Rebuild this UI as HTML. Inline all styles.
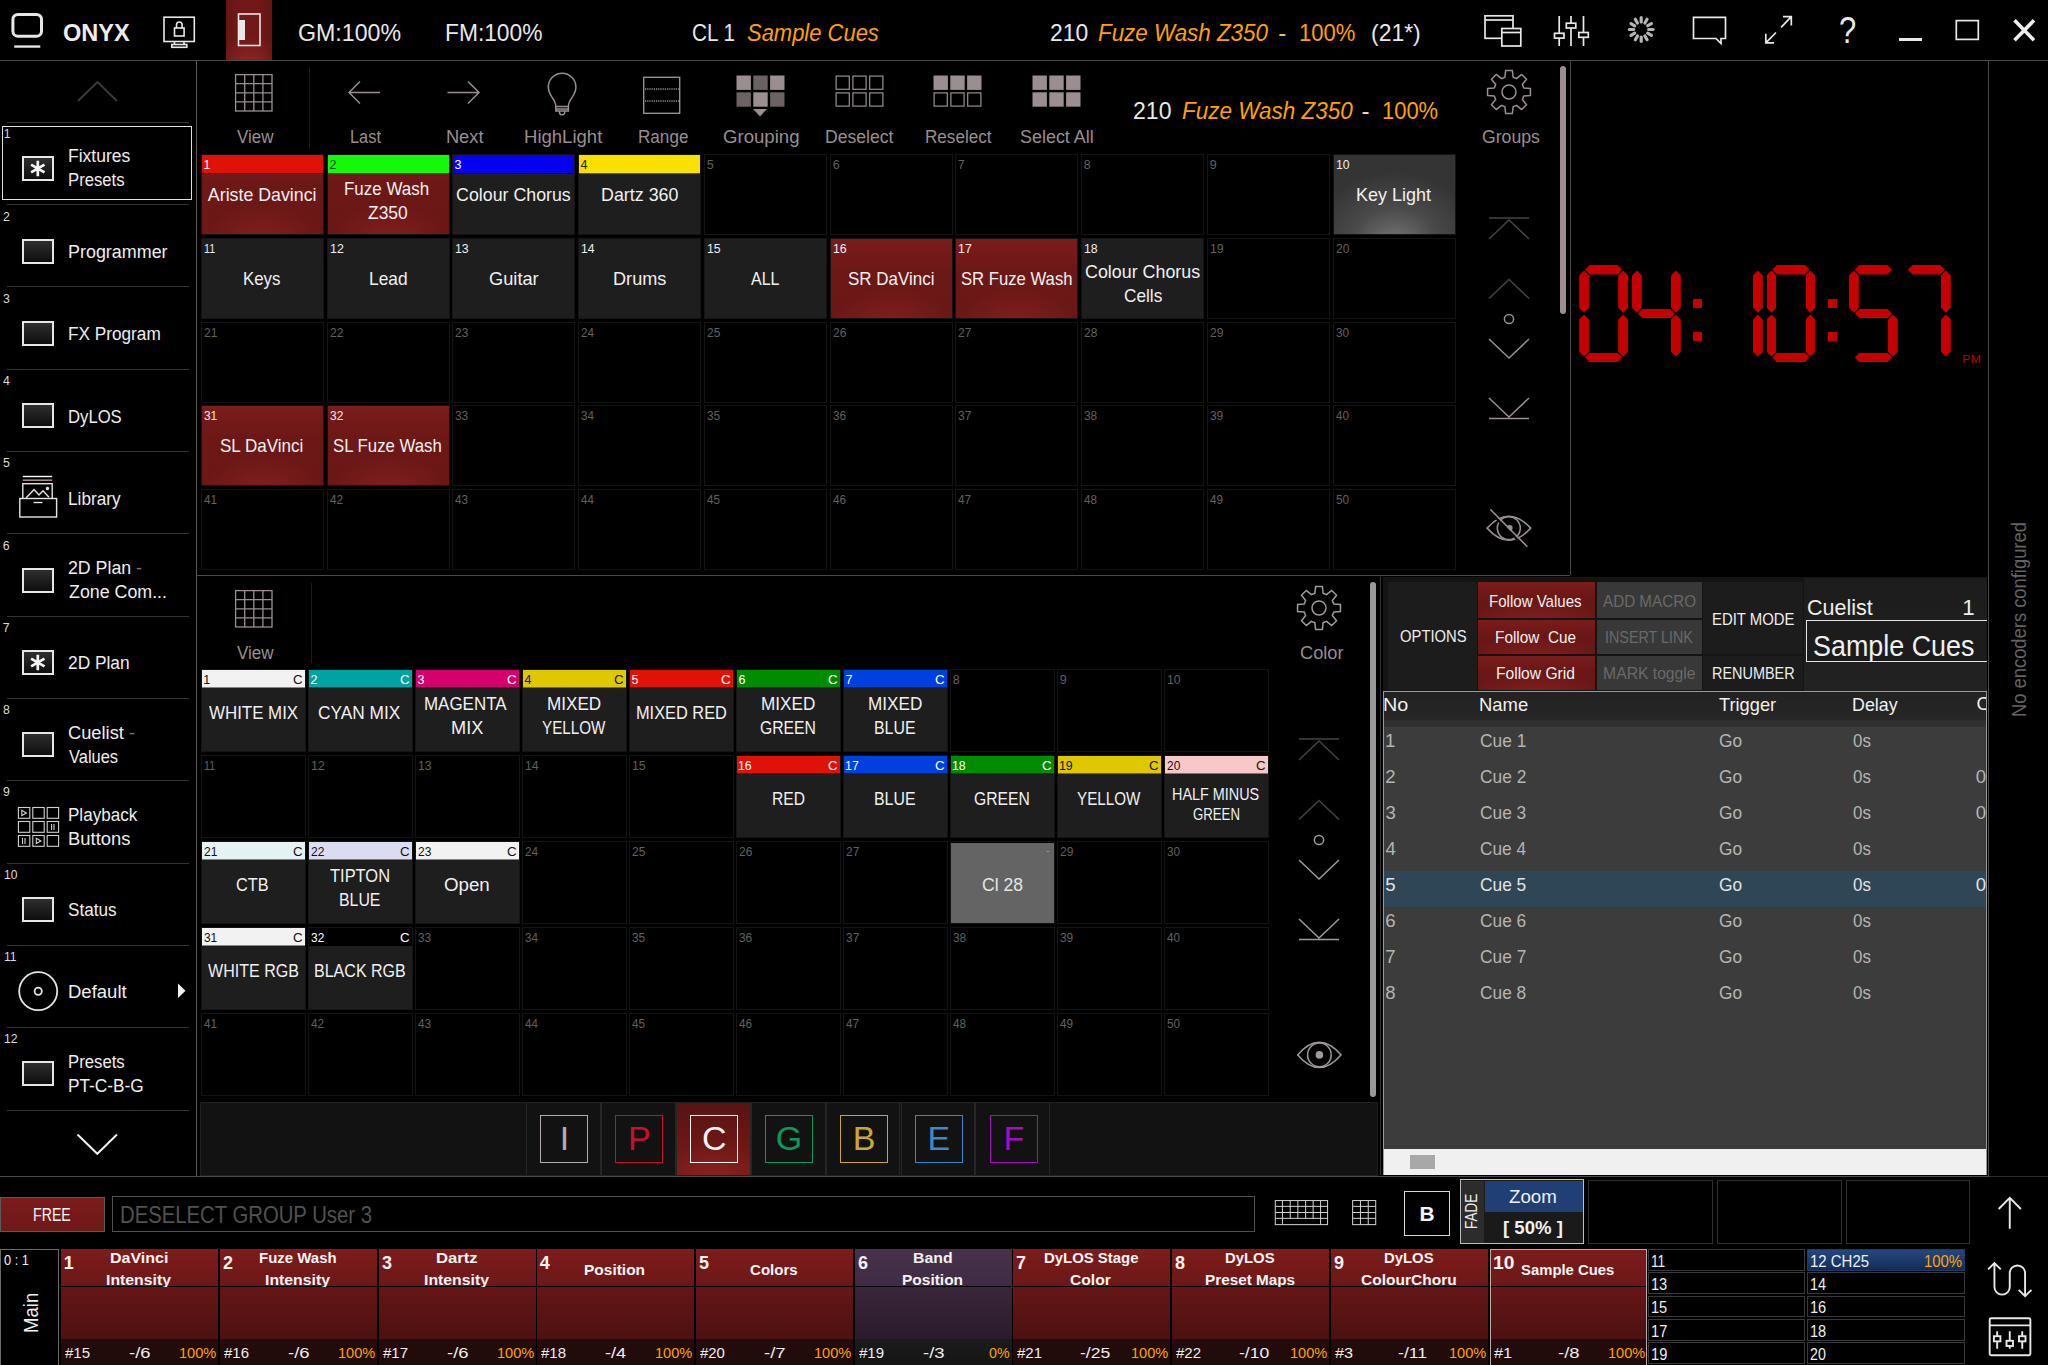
<!DOCTYPE html><html lang="en"><head><meta charset="utf-8"><title>ONYX</title><style>*{box-sizing:border-box;margin:0;padding:0}
html,body{width:2048px;height:1365px;background:#000;overflow:hidden}
body{font-family:"Liberation Sans",sans-serif;color:#e6e6e6;position:relative}
.a{position:absolute}
.t{position:absolute;white-space:nowrap;line-height:1;transform-origin:0 50%}
svg{position:absolute;overflow:visible}
.slot{position:absolute;border:1px solid #1b1b1b;background:#000}
.cell{position:absolute;background:#1e1e1e}
.red{background:radial-gradient(ellipse 50% 50% at 50% 110%,#82201e 0%,rgba(130,32,30,0) 100%),radial-gradient(ellipse 120% 120% at 50% 40%,rgba(0,0,0,0) 60%,rgba(0,0,0,.14) 100%),linear-gradient(#7a1c1b 0,#6c1817 40%,#6a1716 100%)}
.key{background:radial-gradient(ellipse 70% 90% at 50% 112%,#767676 0%,#4a4a4a 50%,#343434 100%)}
.bar{position:absolute;left:0;right:0;top:0}
.seg{position:absolute;background:#c40000}
.pb{position:absolute;top:1249.3px;height:116px;width:156.8px;background:linear-gradient(#7c1c1b 0,#6c1817 36.6px,#000 36.6px,#000 38.4px,#651615 38.4px,#4c1110 90.5px,#260c0c 90.5px,#1f0a0a 116px)}
.pbp{background:linear-gradient(#47314b 0,#3f2b43 36.6px,#000 36.6px,#000 38.4px,#3a263a 38.4px,#2a1b2c 90.5px,#1b1b1b 90.5px,#151515 116px)}
.lst{position:absolute;height:21.7px;border:1px solid #3a3a3a}
.row{position:absolute;left:1384px;width:602px;height:36px}
.cb{position:absolute}
</style></head><body>
<div class="a" style="left:0px;top:60px;width:2048px;height:1px;background:#4a4a4a"></div>
<svg style="left:0;top:0" width="60" height="60"><rect x="12.9" y="14.4" width="28.6" height="21.8" rx="5" fill="none" stroke="#e8e8e8" stroke-width="3"/><rect x="14.2" y="45.4" width="26.1" height="2.3" fill="#e8e8e8"/></svg>
<div class="t" style="left:62.63px;top:21px;font-size:24px;color:#ececec;transform:scaleX(0.9817);font-weight:bold;">ONYX</div>
<svg style="left:160px;top:0" width="40" height="60" fill="none" stroke="#e8e8e8" stroke-width="1.6"><rect x="4" y="17.2" width="30.3" height="24.3"/><path d="M14.5 41.5v3M24 41.5v3"/><rect x="11.8" y="44.5" width="15" height="2.8"/><rect x="14.5" y="28" width="9.6" height="8"/><path d="M16.5 28v-3.200a2.800 2.800 0 0 1 5.600 0v3.200"/></svg>
<div class="a" style="left:226px;top:0px;width:46px;height:60px;background:radial-gradient(ellipse 70% 45% at 50% 105%,#8e2421 0%,rgba(142,36,33,0) 100%),linear-gradient(90deg,#641615 0,#701918 30%,#701918 70%,#641615 100%)"></div>
<svg style="left:226px;top:0" width="46" height="60"><rect x="12.5" y="14" width="21.5" height="31.5" fill="none" stroke="#e8e8e8" stroke-width="1.6"/><rect x="12.500" y="20" width="6.500" height="20" fill="#e8e8e8"/></svg>
<div class="t" style="left:298.33px;top:21px;font-size:24.1px;color:#e8e8e8;transform:scaleX(0.9621);">GM:100%</div>
<div class="t" style="left:444.53px;top:21px;font-size:24.1px;color:#e8e8e8;transform:scaleX(0.9452);">FM:100%</div>
<div class="t" style="left:692.15px;top:21px;font-size:24.1px;color:#e8e8e8;transform:scaleX(0.8597);">CL 1</div>
<div class="t" style="left:747.08px;top:21px;font-size:24.1px;color:#ffa200;transform:scaleX(0.9115);font-style:italic;">Sample Cues</div>
<div class="t" style="left:1049.55px;top:21px;font-size:24.1px;color:#e8e8e8;transform:scaleX(0.9512);">210</div>
<div class="t" style="left:1097.91px;top:21px;font-size:24.1px;color:#ffa200;transform:scaleX(0.9285);font-style:italic;">Fuze Wash Z350</div>
<div class="t" style="left:1278.14px;top:21px;font-size:24.1px;color:#f0c070;">-</div>
<div class="t" style="left:1299.02px;top:21px;font-size:24.1px;color:#ffa200;transform:scaleX(0.9127);">100%</div>
<div class="t" style="left:1370.58px;top:21px;font-size:24.1px;color:#e8e8e8;transform:scaleX(0.9523);">(21*)</div>
<svg style="left:1480px;top:0" width="50" height="60" fill="none" stroke="#e8e8e8" stroke-width="1.7"><rect x="5" y="15.8" width="28" height="22.5"/><path d="M5 20h28"/><rect x="21.8" y="28.5" width="19" height="17.5" fill="#000"/><path d="M21.8 32.5h19"/></svg>
<svg style="left:1550px;top:0" width="50" height="60" fill="none" stroke="#e8e8e8" stroke-width="1.7"><path d="M9.2 16v30M21 16v30M33.5 16v30"/><rect x="4.5" y="33.3" width="9.5" height="4.8" fill="#000"/><rect x="16.3" y="23.2" width="9.5" height="4.8" fill="#000"/><rect x="28.8" y="32.5" width="9.5" height="4.8" fill="#000"/></svg>
<svg style="left:1621px;top:9px" width="42" height="42" stroke="#b6b6b6" stroke-width="3.200" stroke-linecap="round"><path d="M27.7 20.5L32.0 20.5"/><path d="M26.7 24.2L30.4 26.4"/><path d="M23.9 27.0L26.1 30.7"/><path d="M20.2 28.0L20.2 32.3"/><path d="M16.5 27.0L14.3 30.7"/><path d="M13.7 24.2L10.0 26.4"/><path d="M12.7 20.5L8.4 20.5"/><path d="M13.7 16.8L10.0 14.6"/><path d="M16.4 14.0L14.3 10.3"/><path d="M20.2 13.0L20.2 8.7"/><path d="M23.9 14.0L26.1 10.3"/><path d="M26.7 16.7L30.4 14.6"/></svg>
<svg style="left:1690px;top:0" width="50" height="60" fill="none" stroke="#e8e8e8" stroke-width="1.7"><path d="M3.5 17.3h32v21.200h-4.500v5l-5-5h-22.500z"/></svg>
<svg style="left:1760px;top:0" width="50" height="60" fill="none" stroke="#e8e8e8" stroke-width="1.7"><path d="M21.100 27.300L31.300 16.700M23 16.700h8.300v8.900M16 32.500L5.800 42.800M5.800 33.800v9h8.200"/></svg>
<div class="t" style="left:1838.93px;top:12px;font-size:37.5px;color:#e8e8e8;transform:scaleX(0.8256);">?</div>
<div class="a" style="left:1898.5px;top:38px;width:23.7px;height:2.5px;background:#e8e8e8"></div>
<svg style="left:1950px;top:0" width="40" height="60" fill="none" stroke="#e8e8e8" stroke-width="1.7"><rect x="6.300" y="20.600" width="22" height="18.800"/></svg>
<svg style="left:2005px;top:0" width="40" height="60" fill="none" stroke="#ececec" stroke-width="3.6"><path d="M9.5 20.300L29 40.300M29 20.300L9.5 40.300"/></svg>
<div class="a" style="left:196px;top:61px;width:1px;height:1115px;background:#5a5a5a"></div>
<svg style="left:70px;top:78px" width="56" height="30" fill="none" stroke="#3c3c3c" stroke-width="1.8"><path d="M8 23L27.5 4L47 23"/></svg>
<div class="a" style="left:7px;top:122px;width:182px;height:1px;background:#343434"></div>
<div class="t" style="left:3.71px;top:128px;font-size:12.3px;color:#dcdcdc;">1</div>
<div class="a" style="left:22.4px;top:156.3px;width:31.6px;height:25px;border:2px solid #e6e6e6;background:linear-gradient(#2e2e2e,#0e0e0e)"></div>
<svg style="left:22.4px;top:156.3px" width="32" height="25" stroke="#f4f4f4" stroke-width="2.7"><path d="M15.8 4.800v15.400M9.100 8.700l13.400 7.700M22.500 8.700l-13.400 7.700"/></svg>
<div class="t" style="left:67.76px;top:147px;font-size:18px;color:#eee;transform:scaleX(0.9728);">Fixtures</div>
<div class="t" style="left:67.83px;top:171px;font-size:18px;color:#eee;transform:scaleX(0.9271);">Presets</div>
<div class="a" style="left:7px;top:204px;width:182px;height:1px;background:#343434"></div>
<div class="t" style="left:2.88px;top:211px;font-size:12.3px;color:#dcdcdc;">2</div>
<div class="a" style="left:22.4px;top:238.55px;width:31.6px;height:25px;border:2px solid #e6e6e6;background:linear-gradient(#2e2e2e,#0e0e0e)"></div>
<div class="t" style="left:67.73px;top:243px;font-size:18px;color:#eee;transform:scaleX(0.9955);">Programmer</div>
<div class="a" style="left:7px;top:286px;width:182px;height:1px;background:#343434"></div>
<div class="t" style="left:2.92px;top:293px;font-size:12.3px;color:#dcdcdc;">3</div>
<div class="a" style="left:22.4px;top:320.8px;width:31.6px;height:25px;border:2px solid #e6e6e6;background:linear-gradient(#2e2e2e,#0e0e0e)"></div>
<div class="t" style="left:67.79px;top:325px;font-size:18px;color:#eee;transform:scaleX(0.9559);">FX Program</div>
<div class="a" style="left:7px;top:369px;width:182px;height:1px;background:#343434"></div>
<div class="t" style="left:2.92px;top:375px;font-size:12.3px;color:#dcdcdc;">4</div>
<div class="a" style="left:22.4px;top:403.05px;width:31.6px;height:25px;border:2px solid #e6e6e6;background:linear-gradient(#2e2e2e,#0e0e0e)"></div>
<div class="t" style="left:67.83px;top:408px;font-size:18px;color:#eee;transform:scaleX(0.9262);">DyLOS</div>
<div class="a" style="left:7px;top:451px;width:182px;height:1px;background:#343434"></div>
<div class="t" style="left:2.89px;top:457px;font-size:12.3px;color:#dcdcdc;">5</div>
<svg style="left:16px;top:473.6px" width="44" height="48" fill="none" stroke="#e4e4e4" stroke-width="1.4"><path d="M6.800 2.500h29.400" stroke="#fff"/><path d="M6.800 6.200h29.400" stroke="#c09a9a"/><rect x="6.800" y="9.700" width="29.400" height="17"/><path d="M10 24l8-8.500 5 5.500 4-4.300 6 6.500"/><circle cx="31.500" cy="14.500" r="1" fill="#e4e4e4"/><rect x="3.800" y="24.500" width="36.800" height="18.500" fill="#000"/><path d="M17.500 28.500h9"/></svg>
<div class="t" style="left:67.79px;top:490px;font-size:18px;color:#eee;transform:scaleX(0.9550);">Library</div>
<div class="a" style="left:7px;top:533px;width:182px;height:1px;background:#343434"></div>
<div class="t" style="left:2.84px;top:540px;font-size:12.3px;color:#dcdcdc;">6</div>
<div class="a" style="left:22.4px;top:567.55px;width:31.6px;height:25px;border:2px solid #e6e6e6;background:linear-gradient(#2e2e2e,#0e0e0e)"></div>
<div class="t" style="left:68.31px;top:559px;font-size:18px;color:#eee;transform:scaleX(0.9860);">2D Plan <span style="color:#777">-</span></div>
<div class="t" style="left:68.63px;top:583px;font-size:18px;color:#eee;transform:scaleX(0.9895);">Zone Com...</div>
<div class="a" style="left:7px;top:616px;width:182px;height:1px;background:#343434"></div>
<div class="t" style="left:2.87px;top:622px;font-size:12.3px;color:#dcdcdc;">7</div>
<div class="a" style="left:22.4px;top:649.8px;width:31.6px;height:25px;border:2px solid #e6e6e6;background:linear-gradient(#2e2e2e,#0e0e0e)"></div>
<svg style="left:22.4px;top:649.8px" width="32" height="25" stroke="#f4f4f4" stroke-width="2.7"><path d="M15.8 4.800v15.400M9.100 8.700l13.400 7.700M22.500 8.700l-13.400 7.700"/></svg>
<div class="t" style="left:68.33px;top:654px;font-size:18px;color:#eee;transform:scaleX(0.9619);">2D Plan</div>
<div class="a" style="left:7px;top:698px;width:182px;height:1px;background:#343434"></div>
<div class="t" style="left:2.88px;top:704px;font-size:12.3px;color:#dcdcdc;">8</div>
<div class="a" style="left:22.4px;top:732.05px;width:31.6px;height:25px;border:2px solid #e6e6e6;background:linear-gradient(#2e2e2e,#0e0e0e)"></div>
<div class="t" style="left:68.27px;top:724px;font-size:18px;color:#eee;transform:scaleX(1.0155);">Cuelist <span style="color:#777">-</span></div>
<div class="t" style="left:69.13px;top:748px;font-size:18px;color:#eee;transform:scaleX(0.9133);">Values</div>
<div class="a" style="left:7px;top:780px;width:182px;height:1px;background:#343434"></div>
<div class="t" style="left:2.88px;top:786px;font-size:12.3px;color:#dcdcdc;">9</div>
<svg style="left:16px;top:803.6px" width="46" height="44" fill="none" stroke="#d0d0d0" stroke-width="1.1"><rect x="2.4" y="3.5" width="11.400" height="10.800"/><rect x="16.8" y="3.5" width="11.400" height="10.800"/><rect x="31.2" y="3.5" width="11.400" height="10.800"/><rect x="2.4" y="17.5" width="11.400" height="10.800"/><rect x="16.8" y="17.5" width="11.400" height="10.800"/><rect x="31.2" y="17.5" width="11.400" height="10.800"/><rect x="2.4" y="31.5" width="11.400" height="10.800"/><rect x="16.8" y="31.5" width="11.400" height="10.800"/><rect x="31.2" y="31.5" width="11.400" height="10.800"/><path d="M5.800 6.300l4.600 2.600-4.600 2.600zM20.300 34.300l4.600 2.600-4.600 2.600zM35.600 20v6M38 20v6M6.500 34v6M9 34v6"/></svg>
<div class="t" style="left:67.8px;top:806px;font-size:18px;color:#eee;transform:scaleX(0.9471);">Playback</div>
<div class="t" style="left:67.69px;top:830px;font-size:18px;color:#eee;transform:scaleX(1.0235);">Buttons</div>
<div class="a" style="left:7px;top:863px;width:182px;height:1px;background:#343434"></div>
<div class="t" style="left:3.68px;top:869px;font-size:12.3px;color:#dcdcdc;transform:scaleX(0.9785);">10</div>
<div class="a" style="left:22.4px;top:896.55px;width:31.6px;height:25px;border:2px solid #e6e6e6;background:linear-gradient(#2e2e2e,#0e0e0e)"></div>
<div class="t" style="left:68.42px;top:901px;font-size:18px;color:#eee;transform:scaleX(0.9503);">Status</div>
<div class="a" style="left:7px;top:945px;width:182px;height:1px;background:#343434"></div>
<div class="t" style="left:3.67px;top:951px;font-size:12.3px;color:#dcdcdc;transform:scaleX(0.9882);">11</div>
<svg style="left:16px;top:968.7px" width="44" height="44" fill="none" stroke="#e4e4e4" stroke-width="1.8"><circle cx="22.200" cy="22.200" r="19"/><circle cx="22.200" cy="22.200" r="3.600"/></svg>
<svg style="left:176px;top:982.6px" width="12" height="16"><path d="M2 0.500l7.500 7.300-7.500 7.300z" fill="#f0f0f0"/></svg>
<div class="t" style="left:67.68px;top:983px;font-size:18px;color:#eee;transform:scaleX(1.0284);">Default</div>
<div class="a" style="left:7px;top:1027px;width:182px;height:1px;background:#343434"></div>
<div class="t" style="left:3.67px;top:1033px;font-size:12.3px;color:#dcdcdc;transform:scaleX(0.9896);">12</div>
<div class="a" style="left:22.4px;top:1061.05px;width:31.6px;height:25px;border:2px solid #e6e6e6;background:linear-gradient(#2e2e2e,#0e0e0e)"></div>
<div class="t" style="left:67.83px;top:1053px;font-size:18px;color:#eee;transform:scaleX(0.9288);">Presets</div>
<div class="t" style="left:67.78px;top:1077px;font-size:18px;color:#eee;transform:scaleX(0.9589);">PT-C-B-G</div>
<div class="a" style="left:7px;top:1110px;width:182px;height:1px;background:#343434"></div>
<div class="a" style="left:2.2px;top:126px;width:190.3px;height:74px;border:1.3px solid #e0e0e0"></div>
<svg style="left:70px;top:1128px" width="56" height="30" fill="none" stroke="#f0f0f0" stroke-width="2"><path d="M7.500 6.500L27.300 25.800L47 6.500"/></svg>
<svg style="left:235.2px;top:74.3px" width="38" height="38" fill="none" stroke="#9a8e90" stroke-width="1.3"><rect x="0.6" y="0.6" width="36.4" height="36.4"/><path d="M9.7 0.6v36.4M0.6 9.7h36.4"/><path d="M18.8 0.6v36.4M0.6 18.8h36.4"/><path d="M27.9 0.6v36.4M0.6 27.9h36.4"/></svg>
<div class="t" style="left:236.53px;top:128px;font-size:18.3px;color:#9a8e90;transform:scaleX(0.9311);">View</div>
<div class="a" style="left:309px;top:68px;width:1px;height:80px;background:#1c1c1c"></div>
<svg style="left:345px;top:78px" width="40" height="30" fill="none" stroke="#9a8e90" stroke-width="1.5"><path d="M35 14.5H4M15 3.5L4 14.5l11 11"/></svg>
<div class="t" style="left:350.06px;top:128px;font-size:18.3px;color:#9a8e90;transform:scaleX(0.8952);">Last</div>
<svg style="left:444px;top:78px" width="40" height="30" fill="none" stroke="#9a8e90" stroke-width="1.5"><path d="M3.5 14.5H35M24 3.5l11 11-11 11"/></svg>
<div class="t" style="left:445.89px;top:128px;font-size:18.3px;color:#9a8e90;">Next</div>
<svg style="left:545px;top:70px" width="34" height="48" fill="none" stroke="#9a8e90" stroke-width="1.5"><path d="M10.800 36.500c0-8-7.500-10-7.500-19.500a13.800 13.800 0 0 1 27.600 0c0 9.500-7.500 11.500-7.500 19.500zM10.800 36.500v4.500h12.600v-4.500M10.800 39h12.600M14.500 41v1.200a2.600 2.600 0 0 0 5.200 0v-1.200"/></svg>
<div class="t" style="left:524.08px;top:128px;font-size:18.3px;color:#9a8e90;transform:scaleX(1.0134);">HighLight</div>
<svg style="left:642px;top:75px" width="40" height="40" fill="none" stroke="#9a8e90" stroke-width="1.4"><rect x="1.700" y="2.300" width="36" height="36"/><path d="M3 14h34M3 26h34" stroke-dasharray="1.2 1"/></svg>
<div class="t" style="left:637.7px;top:128px;font-size:18.3px;color:#9a8e90;transform:scaleX(0.9358);">Range</div>
<svg style="left:735.5px;top:75px" width="50" height="36"><rect x="0.5" y="0.5" width="14.4" height="14.4" fill="#9a8e90"/><rect x="17.3" y="0.5" width="14.4" height="14.4" fill="#6c6163"/><rect x="34.1" y="0.5" width="14.4" height="14.4" fill="#9a8e90"/><rect x="0.5" y="17.3" width="14.4" height="14.4" fill="#6c6163"/><rect x="17.3" y="17.3" width="14.4" height="14.4" fill="#9a8e90"/><rect x="34.1" y="17.3" width="14.4" height="14.4" fill="#6c6163"/></svg>
<svg style="left:750px;top:108px" width="20" height="10"><path d="M3 1h14l-7 7.500z" fill="#9a8e90"/></svg>
<div class="t" style="left:722.56px;top:128px;font-size:18.3px;color:#9a8e90;transform:scaleX(1.0180);">Grouping</div>
<svg style="left:834.5px;top:75px" width="50" height="36"><rect x="1.1" y="1.1" width="13.2" height="13.2" fill="none" stroke="#9a8e90" stroke-width="1.2"/><rect x="17.9" y="1.1" width="13.2" height="13.2" fill="none" stroke="#9a8e90" stroke-width="1.2"/><rect x="34.7" y="1.1" width="13.2" height="13.2" fill="none" stroke="#9a8e90" stroke-width="1.2"/><rect x="1.1" y="17.9" width="13.2" height="13.2" fill="none" stroke="#9a8e90" stroke-width="1.2"/><rect x="17.9" y="17.9" width="13.2" height="13.2" fill="none" stroke="#9a8e90" stroke-width="1.2"/><rect x="34.7" y="17.9" width="13.2" height="13.2" fill="none" stroke="#9a8e90" stroke-width="1.2"/></svg>
<div class="t" style="left:825.25px;top:128px;font-size:18.3px;color:#9a8e90;transform:scaleX(0.9632);">Deselect</div>
<svg style="left:933px;top:75px" width="50" height="36"><rect x="0.5" y="0.5" width="14.4" height="14.4" fill="#9a8e90"/><rect x="17.3" y="0.5" width="14.4" height="14.4" fill="#9a8e90"/><rect x="34.1" y="0.5" width="14.4" height="14.4" fill="#9a8e90"/><rect x="1.1" y="17.9" width="13.2" height="13.2" fill="none" stroke="#9a8e90" stroke-width="1.2"/><rect x="17.9" y="17.9" width="13.2" height="13.2" fill="none" stroke="#9a8e90" stroke-width="1.2"/><rect x="34.7" y="17.9" width="13.2" height="13.2" fill="none" stroke="#9a8e90" stroke-width="1.2"/></svg>
<div class="t" style="left:925.4px;top:128px;font-size:18.3px;color:#9a8e90;transform:scaleX(0.9344);">Reselect</div>
<svg style="left:1031.8px;top:75px" width="50" height="36"><rect x="0.5" y="0.5" width="14.4" height="14.4" fill="#9a8e90"/><rect x="17.3" y="0.5" width="14.4" height="14.4" fill="#9a8e90"/><rect x="34.1" y="0.5" width="14.4" height="14.4" fill="#9a8e90"/><rect x="0.5" y="17.3" width="14.4" height="14.4" fill="#9a8e90"/><rect x="17.3" y="17.3" width="14.4" height="14.4" fill="#9a8e90"/><rect x="34.1" y="17.3" width="14.4" height="14.4" fill="#9a8e90"/></svg>
<div class="t" style="left:1019.98px;top:128px;font-size:18.3px;color:#9a8e90;transform:scaleX(0.9808);">Select All</div>
<div class="t" style="left:1132.84px;top:99px;font-size:24.1px;color:#e8e8e8;transform:scaleX(0.9565);">210</div>
<div class="t" style="left:1181.81px;top:99px;font-size:24.1px;color:#ffa200;transform:scaleX(0.9328);font-style:italic;">Fuze Wash Z350</div>
<div class="t" style="left:1361.59px;top:99px;font-size:24.1px;color:#f0d8b0;">-</div>
<div class="t" style="left:1382.03px;top:99px;font-size:24.1px;color:#ffa200;transform:scaleX(0.9110);">100%</div>
<svg style="left:1484.9px;top:68.3px" width="48" height="48" fill="none" stroke="#9a8e90" stroke-width="1.5" stroke-linejoin="round"><path d="M19.91 9.26L20.61 2.57L27.39 2.57L28.09 9.26L31.53 10.68L36.75 6.44L41.56 11.25L37.32 16.47L38.74 19.91L45.43 20.61L45.43 27.39L38.74 28.09L37.32 31.53L41.56 36.75L36.75 41.56L31.53 37.32L28.09 38.74L27.39 45.43L20.61 45.43L19.91 38.74L16.47 37.32L11.25 41.56L6.44 36.75L10.68 31.53L9.26 28.09L2.57 27.39L2.57 20.61L9.26 19.91L10.68 16.47L6.44 11.25L11.25 6.44L16.47 10.68z"/><circle cx="24" cy="24" r="7"/></svg>
<div class="t" style="left:1481.71px;top:128px;font-size:18.3px;color:#9a8e90;transform:scaleX(0.9653);">Groups</div>
<div class="a" style="left:200.7px;top:153.7px;width:123.4px;height:81.5px;border:1px solid #141414"></div>
<div class="cell red" style="left:202px;top:155px;width:121px;height:78.5px"></div>
<div class="a" style="left:202px;top:155px;width:121px;height:19.2px;background:#e01208;border-bottom:1.400px solid rgba(0,0,0,.6)"></div>
<div class="t" style="left:203.45px;top:159px;font-size:12.5px;color:#fff;">1</div>
<div class="t" style="left:207.87px;top:187px;font-size:17.8px;color:#f0f0f0;">Ariste Davinci</div>
<div class="a" style="left:326.7px;top:153.7px;width:123.4px;height:81.5px;border:1px solid #141414"></div>
<div class="cell red" style="left:328px;top:155px;width:121px;height:78.5px"></div>
<div class="a" style="left:328px;top:155px;width:121px;height:19.2px;background:#14f80a;border-bottom:1.400px solid rgba(0,0,0,.6)"></div>
<div class="t" style="left:329.57px;top:159px;font-size:12.5px;color:#0a3a0a;">2</div>
<div class="t" style="left:344.41px;top:181px;font-size:17.8px;color:#f0f0f0;transform:scaleX(0.9531);">Fuze Wash</div>
<div class="t" style="left:368.15px;top:205px;font-size:17.8px;color:#f0f0f0;transform:scaleX(0.9819);">Z350</div>
<div class="a" style="left:451.7px;top:153.7px;width:123.4px;height:81.5px;border:1px solid #141414"></div>
<div class="cell" style="left:453px;top:155px;width:121px;height:78.5px"></div>
<div class="a" style="left:453px;top:155px;width:121px;height:19.2px;background:#0600f0;border-bottom:1.400px solid rgba(0,0,0,.6)"></div>
<div class="t" style="left:454.61px;top:159px;font-size:12.5px;color:#fff;">3</div>
<div class="t" style="left:456.09px;top:187px;font-size:17.8px;color:#f0f0f0;">Colour Chorus</div>
<div class="a" style="left:577.7px;top:153.7px;width:123.4px;height:81.5px;border:1px solid #141414"></div>
<div class="cell" style="left:579px;top:155px;width:121px;height:78.5px"></div>
<div class="a" style="left:579px;top:155px;width:121px;height:19.2px;background:#f8e000;border-bottom:1.400px solid rgba(0,0,0,.6)"></div>
<div class="t" style="left:580.61px;top:159px;font-size:12.5px;color:#222;">4</div>
<div class="t" style="left:600.83px;top:187px;font-size:17.8px;color:#f0f0f0;transform:scaleX(1.0051);">Dartz 360</div>
<div class="a" style="left:703.7px;top:153.7px;width:123.4px;height:81.5px;border:1px solid #141414"></div>
<div class="t" style="left:706.79px;top:159px;font-size:12.5px;color:#606060;">5</div>
<div class="a" style="left:829.7px;top:153.7px;width:123.4px;height:81.5px;border:1px solid #141414"></div>
<div class="t" style="left:832.73px;top:159px;font-size:12.5px;color:#606060;">6</div>
<div class="a" style="left:954.7px;top:153.7px;width:123.4px;height:81.5px;border:1px solid #141414"></div>
<div class="t" style="left:957.77px;top:159px;font-size:12.5px;color:#606060;">7</div>
<div class="a" style="left:1080.7px;top:153.7px;width:123.4px;height:81.5px;border:1px solid #141414"></div>
<div class="t" style="left:1083.77px;top:159px;font-size:12.5px;color:#606060;">8</div>
<div class="a" style="left:1206.7px;top:153.7px;width:123.4px;height:81.5px;border:1px solid #141414"></div>
<div class="t" style="left:1209.78px;top:159px;font-size:12.5px;color:#606060;">9</div>
<div class="a" style="left:1332.7px;top:153.7px;width:123.4px;height:81.5px;border:1px solid #141414"></div>
<div class="cell key" style="left:1334px;top:155px;width:121px;height:78.5px"></div>
<div class="t" style="left:1335.67px;top:159px;font-size:12.5px;color:#eee;transform:scaleX(0.9789);">10</div>
<div class="t" style="left:1356.22px;top:187px;font-size:17.8px;color:#f0f0f0;transform:scaleX(1.0107);">Key Light</div>
<div class="a" style="left:200.7px;top:237.7px;width:123.4px;height:81.5px;border:1px solid #141414"></div>
<div class="cell" style="left:202px;top:239px;width:121px;height:78.5px"></div>
<div class="t" style="left:204.49px;top:243px;font-size:12.5px;color:#eee;transform:scaleX(0.8508);">11</div>
<div class="t" style="left:243.42px;top:271px;font-size:17.8px;color:#f0f0f0;transform:scaleX(0.9475);">Keys</div>
<div class="a" style="left:326.7px;top:237.7px;width:123.4px;height:81.5px;border:1px solid #141414"></div>
<div class="cell" style="left:328px;top:239px;width:121px;height:78.5px"></div>
<div class="t" style="left:329.66px;top:243px;font-size:12.5px;color:#eee;transform:scaleX(0.9900);">12</div>
<div class="t" style="left:369.27px;top:271px;font-size:17.8px;color:#f0f0f0;transform:scaleX(0.9759);">Lead</div>
<div class="a" style="left:451.7px;top:237.7px;width:123.4px;height:81.5px;border:1px solid #141414"></div>
<div class="cell" style="left:453px;top:239px;width:121px;height:78.5px"></div>
<div class="t" style="left:454.66px;top:243px;font-size:12.5px;color:#eee;transform:scaleX(0.9837);">13</div>
<div class="t" style="left:488.88px;top:271px;font-size:17.8px;color:#f0f0f0;transform:scaleX(1.0258);">Guitar</div>
<div class="a" style="left:577.7px;top:237.7px;width:123.4px;height:81.5px;border:1px solid #141414"></div>
<div class="cell" style="left:579px;top:239px;width:121px;height:78.5px"></div>
<div class="t" style="left:580.68px;top:243px;font-size:12.5px;color:#eee;transform:scaleX(0.9694);">14</div>
<div class="t" style="left:613.01px;top:271px;font-size:17.8px;color:#f0f0f0;transform:scaleX(1.0198);">Drums</div>
<div class="a" style="left:703.7px;top:237.7px;width:123.4px;height:81.5px;border:1px solid #141414"></div>
<div class="cell" style="left:705px;top:239px;width:121px;height:78.5px"></div>
<div class="t" style="left:706.67px;top:243px;font-size:12.5px;color:#eee;transform:scaleX(0.9818);">15</div>
<div class="t" style="left:751.27px;top:271px;font-size:17.8px;color:#f0f0f0;transform:scaleX(0.8987);">ALL</div>
<div class="a" style="left:829.7px;top:237.7px;width:123.4px;height:81.5px;border:1px solid #141414"></div>
<div class="cell red" style="left:831px;top:239px;width:121px;height:78.5px"></div>
<div class="t" style="left:832.66px;top:243px;font-size:12.5px;color:#eee;transform:scaleX(0.9837);">16</div>
<div class="t" style="left:847.83px;top:271px;font-size:17.8px;color:#f0f0f0;transform:scaleX(0.9551);">SR DaVinci</div>
<div class="a" style="left:954.7px;top:237.7px;width:123.4px;height:81.5px;border:1px solid #141414"></div>
<div class="cell red" style="left:956px;top:239px;width:121px;height:78.5px"></div>
<div class="t" style="left:957.66px;top:243px;font-size:12.5px;color:#eee;transform:scaleX(0.9900);">17</div>
<div class="t" style="left:960.84px;top:271px;font-size:17.8px;color:#f0f0f0;transform:scaleX(0.9378);">SR Fuze Wash</div>
<div class="a" style="left:1080.7px;top:237.7px;width:123.4px;height:81.5px;border:1px solid #141414"></div>
<div class="cell" style="left:1082px;top:239px;width:121px;height:78.5px"></div>
<div class="t" style="left:1083.66px;top:243px;font-size:12.5px;color:#eee;transform:scaleX(0.9832);">18</div>
<div class="t" style="left:1085.09px;top:264px;font-size:17.8px;color:#f0f0f0;transform:scaleX(1.0043);">Colour Chorus</div>
<div class="t" style="left:1123.73px;top:288px;font-size:17.8px;color:#f0f0f0;transform:scaleX(0.9680);">Cells</div>
<div class="a" style="left:1206.7px;top:237.7px;width:123.4px;height:81.5px;border:1px solid #141414"></div>
<div class="t" style="left:1209.66px;top:243px;font-size:12.5px;color:#606060;transform:scaleX(0.9871);">19</div>
<div class="a" style="left:1332.7px;top:237.7px;width:123.4px;height:81.5px;border:1px solid #141414"></div>
<div class="t" style="left:1336px;top:243px;font-size:12.5px;color:#606060;transform:scaleX(0.9541);">20</div>
<div class="a" style="left:200.7px;top:321.7px;width:123.4px;height:81.5px;border:1px solid #141414"></div>
<div class="t" style="left:203.99px;top:327px;font-size:12.5px;color:#606060;transform:scaleX(0.9633);">21</div>
<div class="a" style="left:326.7px;top:321.7px;width:123.4px;height:81.5px;border:1px solid #141414"></div>
<div class="t" style="left:329.99px;top:327px;font-size:12.5px;color:#606060;transform:scaleX(0.9647);">22</div>
<div class="a" style="left:451.7px;top:321.7px;width:123.4px;height:81.5px;border:1px solid #141414"></div>
<div class="t" style="left:455px;top:327px;font-size:12.5px;color:#606060;transform:scaleX(0.9587);">23</div>
<div class="a" style="left:577.7px;top:321.7px;width:123.4px;height:81.5px;border:1px solid #141414"></div>
<div class="t" style="left:581.01px;top:327px;font-size:12.5px;color:#606060;transform:scaleX(0.9451);">24</div>
<div class="a" style="left:703.7px;top:321.7px;width:123.4px;height:81.5px;border:1px solid #141414"></div>
<div class="t" style="left:707px;top:327px;font-size:12.5px;color:#606060;transform:scaleX(0.9568);">25</div>
<div class="a" style="left:829.7px;top:321.7px;width:123.4px;height:81.5px;border:1px solid #141414"></div>
<div class="t" style="left:833px;top:327px;font-size:12.5px;color:#606060;transform:scaleX(0.9587);">26</div>
<div class="a" style="left:954.7px;top:321.7px;width:123.4px;height:81.5px;border:1px solid #141414"></div>
<div class="t" style="left:957.99px;top:327px;font-size:12.5px;color:#606060;transform:scaleX(0.9647);">27</div>
<div class="a" style="left:1080.7px;top:321.7px;width:123.4px;height:81.5px;border:1px solid #141414"></div>
<div class="t" style="left:1084px;top:327px;font-size:12.5px;color:#606060;transform:scaleX(0.9582);">28</div>
<div class="a" style="left:1206.7px;top:321.7px;width:123.4px;height:81.5px;border:1px solid #141414"></div>
<div class="t" style="left:1210px;top:327px;font-size:12.5px;color:#606060;transform:scaleX(0.9619);">29</div>
<div class="a" style="left:1332.7px;top:321.7px;width:123.4px;height:81.5px;border:1px solid #141414"></div>
<div class="t" style="left:1336.15px;top:327px;font-size:12.5px;color:#606060;transform:scaleX(0.9429);">30</div>
<div class="a" style="left:200.7px;top:404.7px;width:123.4px;height:81.5px;border:1px solid #141414"></div>
<div class="cell red" style="left:202px;top:406px;width:121px;height:78.5px"></div>
<div class="t" style="left:204.15px;top:410px;font-size:12.5px;color:#eee;transform:scaleX(0.9518);">31</div>
<div class="t" style="left:220.03px;top:438px;font-size:17.8px;color:#f0f0f0;transform:scaleX(0.9588);">SL DaVinci</div>
<div class="a" style="left:326.7px;top:404.7px;width:123.4px;height:81.5px;border:1px solid #141414"></div>
<div class="cell red" style="left:328px;top:406px;width:121px;height:78.5px"></div>
<div class="t" style="left:330.15px;top:410px;font-size:12.5px;color:#eee;transform:scaleX(0.9532);">32</div>
<div class="t" style="left:333.44px;top:438px;font-size:17.8px;color:#f0f0f0;transform:scaleX(0.9436);">SL Fuze Wash</div>
<div class="a" style="left:451.7px;top:404.7px;width:123.4px;height:81.5px;border:1px solid #141414"></div>
<div class="t" style="left:455.15px;top:410px;font-size:12.5px;color:#606060;transform:scaleX(0.9473);">33</div>
<div class="a" style="left:577.7px;top:404.7px;width:123.4px;height:81.5px;border:1px solid #141414"></div>
<div class="t" style="left:581.16px;top:410px;font-size:12.5px;color:#606060;transform:scaleX(0.9340);">34</div>
<div class="a" style="left:703.7px;top:404.7px;width:123.4px;height:81.5px;border:1px solid #141414"></div>
<div class="t" style="left:707.15px;top:410px;font-size:12.5px;color:#606060;transform:scaleX(0.9455);">35</div>
<div class="a" style="left:829.7px;top:404.7px;width:123.4px;height:81.5px;border:1px solid #141414"></div>
<div class="t" style="left:833.15px;top:410px;font-size:12.5px;color:#606060;transform:scaleX(0.9473);">36</div>
<div class="a" style="left:954.7px;top:404.7px;width:123.4px;height:81.5px;border:1px solid #141414"></div>
<div class="t" style="left:958.15px;top:410px;font-size:12.5px;color:#606060;transform:scaleX(0.9532);">37</div>
<div class="a" style="left:1080.7px;top:404.7px;width:123.4px;height:81.5px;border:1px solid #141414"></div>
<div class="t" style="left:1084.15px;top:410px;font-size:12.5px;color:#606060;transform:scaleX(0.9469);">38</div>
<div class="a" style="left:1206.7px;top:404.7px;width:123.4px;height:81.5px;border:1px solid #141414"></div>
<div class="t" style="left:1210.15px;top:410px;font-size:12.5px;color:#606060;transform:scaleX(0.9505);">39</div>
<div class="a" style="left:1332.7px;top:404.7px;width:123.4px;height:81.5px;border:1px solid #141414"></div>
<div class="t" style="left:1336.33px;top:410px;font-size:12.5px;color:#606060;transform:scaleX(0.9293);">40</div>
<div class="a" style="left:200.7px;top:488.7px;width:123.4px;height:81.5px;border:1px solid #141414"></div>
<div class="t" style="left:204.33px;top:494px;font-size:12.5px;color:#606060;transform:scaleX(0.9380);">41</div>
<div class="a" style="left:326.7px;top:488.7px;width:123.4px;height:81.5px;border:1px solid #141414"></div>
<div class="t" style="left:330.33px;top:494px;font-size:12.5px;color:#606060;transform:scaleX(0.9393);">42</div>
<div class="a" style="left:451.7px;top:488.7px;width:123.4px;height:81.5px;border:1px solid #141414"></div>
<div class="t" style="left:455.33px;top:494px;font-size:12.5px;color:#606060;transform:scaleX(0.9336);">43</div>
<div class="a" style="left:577.7px;top:488.7px;width:123.4px;height:81.5px;border:1px solid #141414"></div>
<div class="t" style="left:581.34px;top:494px;font-size:12.5px;color:#606060;transform:scaleX(0.9207);">44</div>
<div class="a" style="left:703.7px;top:488.7px;width:123.4px;height:81.5px;border:1px solid #141414"></div>
<div class="t" style="left:707.33px;top:494px;font-size:12.5px;color:#606060;transform:scaleX(0.9319);">45</div>
<div class="a" style="left:829.7px;top:488.7px;width:123.4px;height:81.5px;border:1px solid #141414"></div>
<div class="t" style="left:833.33px;top:494px;font-size:12.5px;color:#606060;transform:scaleX(0.9336);">46</div>
<div class="a" style="left:954.7px;top:488.7px;width:123.4px;height:81.5px;border:1px solid #141414"></div>
<div class="t" style="left:958.33px;top:494px;font-size:12.5px;color:#606060;transform:scaleX(0.9393);">47</div>
<div class="a" style="left:1080.7px;top:488.7px;width:123.4px;height:81.5px;border:1px solid #141414"></div>
<div class="t" style="left:1084.33px;top:494px;font-size:12.5px;color:#606060;transform:scaleX(0.9332);">48</div>
<div class="a" style="left:1206.7px;top:488.7px;width:123.4px;height:81.5px;border:1px solid #141414"></div>
<div class="t" style="left:1210.33px;top:494px;font-size:12.5px;color:#606060;transform:scaleX(0.9367);">49</div>
<div class="a" style="left:1332.7px;top:488.7px;width:123.4px;height:81.5px;border:1px solid #141414"></div>
<div class="t" style="left:1336.13px;top:494px;font-size:12.5px;color:#606060;transform:scaleX(0.9446);">50</div>
<svg style="left:1487px;top:216.5px" width="44" height="210" fill="none" stroke-width="1.5"><path d="M2 1h40M2 22L22 3l20 19" stroke="#444"/><path d="M2 81.500L22 62.500l20 19" stroke="#444"/><circle cx="22" cy="102" r="4.600" stroke="#9a8e90"/><path d="M2 122l20 19 20-19" stroke="#9a8e90"/><path d="M2 181l20 19 20-19M2 201.500h40" stroke="#9a8e90"/></svg>
<svg style="left:1480px;top:500px" width="60" height="56" fill="none" stroke="#9a8e90" stroke-width="1.600"><path d="M7.100 28.100Q28.800 4.300 50.700 28.100Q28.800 52.300 7.100 28.100z"/><circle cx="28.800" cy="28.100" r="11.500"/><circle cx="29.600" cy="28" r="3" fill="#9a8e90" stroke="none"/><path d="M8.700 10.800L45.900 48.200" stroke="#000" stroke-width="2.200"/><path d="M10.200 9.300L47.400 46.700"/></svg>
<div class="a" style="left:1560px;top:66px;width:5.5px;height:248px;background:#9a8e90;border-radius:3px"></div>
<div class="a" style="left:1570px;top:61px;width:1px;height:514px;background:#4a4a4a"></div>
<div class="a" style="left:197px;top:575px;width:1373px;height:1px;background:#4a4a4a"></div>
<div class="a" style="left:1988px;top:61px;width:1px;height:1115px;background:#4a4a4a"></div>
<div class="a" style="left:1571px;top:61px;width:417px;height:514px" role="img" aria-label="04:10:57 PM"></div>
<div class="seg" style="left:1585px;top:264.8px;width:37.2px;height:9.8px;clip-path:polygon(0% 50%,13.17% 0%,86.83% 0%,100% 50%,86.83% 100%,13.17% 100%)"></div>
<div class="seg" style="left:1618.2px;top:270.6px;width:9.8px;height:42.1px;clip-path:polygon(50% 0%,100% 11.64%,100% 88.36%,50% 100%,0% 88.36%,0% 11.64%)"></div>
<div class="seg" style="left:1618.2px;top:314.5px;width:9.8px;height:42.1px;clip-path:polygon(50% 0%,100% 11.64%,100% 88.36%,50% 100%,0% 88.36%,0% 11.64%)"></div>
<div class="seg" style="left:1585px;top:352.6px;width:37.2px;height:9.8px;clip-path:polygon(0% 50%,13.17% 0%,86.83% 0%,100% 50%,86.83% 100%,13.17% 100%)"></div>
<div class="seg" style="left:1579.2px;top:314.5px;width:9.8px;height:42.1px;clip-path:polygon(50% 0%,100% 11.64%,100% 88.36%,50% 100%,0% 88.36%,0% 11.64%)"></div>
<div class="seg" style="left:1579.2px;top:270.6px;width:9.8px;height:42.1px;clip-path:polygon(50% 0%,100% 11.64%,100% 88.36%,50% 100%,0% 88.36%,0% 11.64%)"></div>
<div class="seg" style="left:1632px;top:270.6px;width:9.8px;height:42.1px;clip-path:polygon(50% 0%,100% 11.64%,100% 88.36%,50% 100%,0% 88.36%,0% 11.64%)"></div>
<div class="seg" style="left:1637.8px;top:308.7px;width:37.2px;height:9.8px;clip-path:polygon(0% 50%,13.17% 0%,86.83% 0%,100% 50%,86.83% 100%,13.17% 100%)"></div>
<div class="seg" style="left:1671px;top:270.6px;width:9.8px;height:42.1px;clip-path:polygon(50% 0%,100% 11.64%,100% 88.36%,50% 100%,0% 88.36%,0% 11.64%)"></div>
<div class="seg" style="left:1671px;top:314.5px;width:9.8px;height:42.1px;clip-path:polygon(50% 0%,100% 11.64%,100% 88.36%,50% 100%,0% 88.36%,0% 11.64%)"></div>
<div class="seg" style="left:1753px;top:270.6px;width:9.8px;height:42.1px;clip-path:polygon(50% 0%,100% 11.64%,100% 88.36%,50% 100%,0% 88.36%,0% 11.64%)"></div>
<div class="seg" style="left:1753px;top:314.5px;width:9.8px;height:42.1px;clip-path:polygon(50% 0%,100% 11.64%,100% 88.36%,50% 100%,0% 88.36%,0% 11.64%)"></div>
<div class="seg" style="left:1772.3px;top:264.8px;width:37.2px;height:9.8px;clip-path:polygon(0% 50%,13.17% 0%,86.83% 0%,100% 50%,86.83% 100%,13.17% 100%)"></div>
<div class="seg" style="left:1805.5px;top:270.6px;width:9.8px;height:42.1px;clip-path:polygon(50% 0%,100% 11.64%,100% 88.36%,50% 100%,0% 88.36%,0% 11.64%)"></div>
<div class="seg" style="left:1805.5px;top:314.5px;width:9.8px;height:42.1px;clip-path:polygon(50% 0%,100% 11.64%,100% 88.36%,50% 100%,0% 88.36%,0% 11.64%)"></div>
<div class="seg" style="left:1772.3px;top:352.6px;width:37.2px;height:9.8px;clip-path:polygon(0% 50%,13.17% 0%,86.83% 0%,100% 50%,86.83% 100%,13.17% 100%)"></div>
<div class="seg" style="left:1766.5px;top:314.5px;width:9.8px;height:42.1px;clip-path:polygon(50% 0%,100% 11.64%,100% 88.36%,50% 100%,0% 88.36%,0% 11.64%)"></div>
<div class="seg" style="left:1766.5px;top:270.6px;width:9.8px;height:42.1px;clip-path:polygon(50% 0%,100% 11.64%,100% 88.36%,50% 100%,0% 88.36%,0% 11.64%)"></div>
<div class="seg" style="left:1854.8px;top:264.8px;width:37.2px;height:9.8px;clip-path:polygon(0% 50%,13.17% 0%,86.83% 0%,100% 50%,86.83% 100%,13.17% 100%)"></div>
<div class="seg" style="left:1849px;top:270.6px;width:9.8px;height:42.1px;clip-path:polygon(50% 0%,100% 11.64%,100% 88.36%,50% 100%,0% 88.36%,0% 11.64%)"></div>
<div class="seg" style="left:1854.8px;top:308.7px;width:37.2px;height:9.8px;clip-path:polygon(0% 50%,13.17% 0%,86.83% 0%,100% 50%,86.83% 100%,13.17% 100%)"></div>
<div class="seg" style="left:1888px;top:314.5px;width:9.8px;height:42.1px;clip-path:polygon(50% 0%,100% 11.64%,100% 88.36%,50% 100%,0% 88.36%,0% 11.64%)"></div>
<div class="seg" style="left:1854.8px;top:352.6px;width:37.2px;height:9.8px;clip-path:polygon(0% 50%,13.17% 0%,86.83% 0%,100% 50%,86.83% 100%,13.17% 100%)"></div>
<div class="seg" style="left:1907.8px;top:264.8px;width:37.2px;height:9.8px;clip-path:polygon(0% 50%,13.17% 0%,86.83% 0%,100% 50%,86.83% 100%,13.17% 100%)"></div>
<div class="seg" style="left:1941px;top:270.6px;width:9.8px;height:42.1px;clip-path:polygon(50% 0%,100% 11.64%,100% 88.36%,50% 100%,0% 88.36%,0% 11.64%)"></div>
<div class="seg" style="left:1941px;top:314.5px;width:9.8px;height:42.1px;clip-path:polygon(50% 0%,100% 11.64%,100% 88.36%,50% 100%,0% 88.36%,0% 11.64%)"></div>
<div class="a" style="left:1693px;top:299.2px;width:9.4px;height:9.3px;background:#c40000"></div>
<div class="a" style="left:1693px;top:331.5px;width:9.4px;height:9.3px;background:#c40000"></div>
<div class="a" style="left:1828px;top:299.2px;width:9.4px;height:9.3px;background:#c40000"></div>
<div class="a" style="left:1828px;top:331.5px;width:9.4px;height:9.3px;background:#c40000"></div>
<div class="t" style="left:1579px;top:262px;font-size:102px;letter-spacing:-3px;color:transparent">04:10:57</div>
<div class="t" style="left:1961.67px;top:354px;font-size:11.8px;color:#b40000;transform:scaleX(1.0657);">PM</div>
<div class="t" style="left:2009px;top:716.51px;font-size:20px;color:#646464;transform:rotate(-90deg) scaleX(0.9178);transform-origin:0 0">No encoders configured</div>
<svg style="left:235.2px;top:590px" width="38" height="38" fill="none" stroke="#9a8e90" stroke-width="1.3"><rect x="0.6" y="0.6" width="36.4" height="36.4"/><path d="M9.7 0.6v36.4M0.6 9.7h36.4"/><path d="M18.8 0.6v36.4M0.6 18.8h36.4"/><path d="M27.9 0.6v36.4M0.6 27.9h36.4"/></svg>
<div class="t" style="left:236.53px;top:644px;font-size:18.3px;color:#9a8e90;transform:scaleX(0.9311);">View</div>
<div class="a" style="left:311px;top:583px;width:1px;height:80px;background:#1c1c1c"></div>
<svg style="left:1295.2px;top:584.2px" width="48" height="48" fill="none" stroke="#a09a9c" stroke-width="1.5" stroke-linejoin="round"><path d="M19.91 9.26L20.61 2.57L27.39 2.57L28.09 9.26L31.53 10.68L36.75 6.44L41.56 11.25L37.32 16.47L38.74 19.91L45.43 20.61L45.43 27.39L38.74 28.09L37.32 31.53L41.56 36.75L36.75 41.56L31.53 37.32L28.09 38.74L27.39 45.43L20.61 45.43L19.91 38.74L16.47 37.32L11.25 41.56L6.44 36.75L10.68 31.53L9.26 28.09L2.57 27.39L2.57 20.61L9.26 19.91L10.68 16.47L6.44 11.25L11.25 6.44L16.47 10.68z"/><circle cx="24" cy="24" r="7"/></svg>
<div class="t" style="left:1299.58px;top:644px;font-size:18.3px;color:#9a8e90;transform:scaleX(0.9954);">Color</div>
<div class="a" style="left:200.5px;top:668.7px;width:105.6px;height:83.6px;border:1px solid #141414"></div>
<div class="a" style="left:202px;top:670px;width:102.7px;height:80.8px;background:#1e1e1e"></div>
<div class="a" style="left:202px;top:670px;width:102.7px;height:17.7px;background:#f2f2f2;border-bottom:1px solid rgba(0,0,0,.45)"></div>
<div class="t" style="left:203.35px;top:674px;font-size:12.5px;color:#111;">1</div>
<div class="t" style="left:292.91px;top:673px;font-size:13.3px;color:#111;">C</div>
<div class="t" style="left:209.13px;top:704px;font-size:18.3px;color:#f0f0f0;transform:scaleX(0.9239);">WHITE MIX</div>
<div class="a" style="left:307.5px;top:668.7px;width:105.6px;height:83.6px;border:1px solid #141414"></div>
<div class="a" style="left:309px;top:670px;width:102.7px;height:80.8px;background:#1e1e1e"></div>
<div class="a" style="left:309px;top:670px;width:102.7px;height:17.7px;background:#00a2a2;border-bottom:1px solid rgba(0,0,0,.45)"></div>
<div class="t" style="left:310.57px;top:674px;font-size:12.5px;color:#fff;">2</div>
<div class="t" style="left:399.91px;top:673px;font-size:13.3px;color:#fff;">C</div>
<div class="t" style="left:318.32px;top:704px;font-size:18.3px;color:#f0f0f0;transform:scaleX(0.9467);">CYAN MIX</div>
<div class="a" style="left:414.5px;top:668.7px;width:105.6px;height:83.6px;border:1px solid #141414"></div>
<div class="a" style="left:416px;top:670px;width:102.7px;height:80.8px;background:#1e1e1e"></div>
<div class="a" style="left:416px;top:670px;width:102.7px;height:17.7px;background:#d4006c;border-bottom:1px solid rgba(0,0,0,.45)"></div>
<div class="t" style="left:417.61px;top:674px;font-size:12.5px;color:#fff;">3</div>
<div class="t" style="left:506.91px;top:673px;font-size:13.3px;color:#fff;">C</div>
<div class="t" style="left:424.41px;top:695px;font-size:18.3px;color:#f0f0f0;transform:scaleX(0.9275);">MAGENTA</div>
<div class="t" style="left:451.01px;top:719px;font-size:18.3px;color:#f0f0f0;transform:scaleX(0.9951);">MIX</div>
<div class="a" style="left:521.5px;top:668.7px;width:105.6px;height:83.6px;border:1px solid #141414"></div>
<div class="a" style="left:523px;top:670px;width:102.7px;height:80.8px;background:#1e1e1e"></div>
<div class="a" style="left:523px;top:670px;width:102.7px;height:17.7px;background:#e0c800;border-bottom:1px solid rgba(0,0,0,.45)"></div>
<div class="t" style="left:524.61px;top:674px;font-size:12.5px;color:#111;">4</div>
<div class="t" style="left:613.91px;top:673px;font-size:13.3px;color:#111;">C</div>
<div class="t" style="left:547.1px;top:695px;font-size:18.3px;color:#f0f0f0;transform:scaleX(0.9356);">MIXED</div>
<div class="t" style="left:542.27px;top:719px;font-size:18.3px;color:#f0f0f0;transform:scaleX(0.8310);">YELLOW</div>
<div class="a" style="left:628.5px;top:668.7px;width:105.6px;height:83.6px;border:1px solid #141414"></div>
<div class="a" style="left:630px;top:670px;width:102.7px;height:80.8px;background:#1e1e1e"></div>
<div class="a" style="left:630px;top:670px;width:102.7px;height:17.7px;background:#e01208;border-bottom:1px solid rgba(0,0,0,.45)"></div>
<div class="t" style="left:631.59px;top:674px;font-size:12.5px;color:#fff;">5</div>
<div class="t" style="left:720.91px;top:673px;font-size:13.3px;color:#fff;">C</div>
<div class="t" style="left:635.96px;top:704px;font-size:18.3px;color:#f0f0f0;transform:scaleX(0.8943);">MIXED RED</div>
<div class="a" style="left:735.5px;top:668.7px;width:105.6px;height:83.6px;border:1px solid #141414"></div>
<div class="a" style="left:737px;top:670px;width:102.7px;height:80.8px;background:#1e1e1e"></div>
<div class="a" style="left:737px;top:670px;width:102.7px;height:17.7px;background:#008c00;border-bottom:1px solid rgba(0,0,0,.45)"></div>
<div class="t" style="left:738.53px;top:674px;font-size:12.5px;color:#fff;">6</div>
<div class="t" style="left:827.91px;top:673px;font-size:13.3px;color:#fff;">C</div>
<div class="t" style="left:761.29px;top:695px;font-size:18.3px;color:#f0f0f0;transform:scaleX(0.9374);">MIXED</div>
<div class="t" style="left:760.11px;top:719px;font-size:18.3px;color:#f0f0f0;transform:scaleX(0.8601);">GREEN</div>
<div class="a" style="left:842.5px;top:668.7px;width:105.6px;height:83.6px;border:1px solid #141414"></div>
<div class="a" style="left:844px;top:670px;width:102.7px;height:80.8px;background:#1e1e1e"></div>
<div class="a" style="left:844px;top:670px;width:102.7px;height:17.7px;background:#0040e0;border-bottom:1px solid rgba(0,0,0,.45)"></div>
<div class="t" style="left:845.57px;top:674px;font-size:12.5px;color:#fff;">7</div>
<div class="t" style="left:934.91px;top:673px;font-size:13.3px;color:#fff;">C</div>
<div class="t" style="left:868.19px;top:695px;font-size:18.3px;color:#f0f0f0;transform:scaleX(0.9374);">MIXED</div>
<div class="t" style="left:874.39px;top:719px;font-size:18.3px;color:#f0f0f0;transform:scaleX(0.8700);">BLUE</div>
<div class="a" style="left:949.5px;top:668.7px;width:105.6px;height:83.6px;border:1px solid #141414"></div>
<div class="t" style="left:952.67px;top:674px;font-size:12.5px;color:#606060;">8</div>
<div class="a" style="left:1056.5px;top:668.7px;width:105.6px;height:83.6px;border:1px solid #141414"></div>
<div class="t" style="left:1059.68px;top:674px;font-size:12.5px;color:#606060;">9</div>
<div class="a" style="left:1163.5px;top:668.7px;width:105.6px;height:83.6px;border:1px solid #141414"></div>
<div class="t" style="left:1166.57px;top:674px;font-size:12.5px;color:#606060;transform:scaleX(0.9789);">10</div>
<div class="a" style="left:200.5px;top:754.7px;width:105.6px;height:83.6px;border:1px solid #141414"></div>
<div class="t" style="left:204.49px;top:760px;font-size:12.5px;color:#606060;transform:scaleX(0.8508);">11</div>
<div class="a" style="left:307.5px;top:754.7px;width:105.6px;height:83.6px;border:1px solid #141414"></div>
<div class="t" style="left:310.56px;top:760px;font-size:12.5px;color:#606060;transform:scaleX(0.9900);">12</div>
<div class="a" style="left:414.5px;top:754.7px;width:105.6px;height:83.6px;border:1px solid #141414"></div>
<div class="t" style="left:417.56px;top:760px;font-size:12.5px;color:#606060;transform:scaleX(0.9837);">13</div>
<div class="a" style="left:521.5px;top:754.7px;width:105.6px;height:83.6px;border:1px solid #141414"></div>
<div class="t" style="left:524.58px;top:760px;font-size:12.5px;color:#606060;transform:scaleX(0.9694);">14</div>
<div class="a" style="left:628.5px;top:754.7px;width:105.6px;height:83.6px;border:1px solid #141414"></div>
<div class="t" style="left:631.57px;top:760px;font-size:12.5px;color:#606060;transform:scaleX(0.9818);">15</div>
<div class="a" style="left:735.5px;top:754.7px;width:105.6px;height:83.6px;border:1px solid #141414"></div>
<div class="a" style="left:737px;top:756px;width:102.7px;height:80.8px;background:#1e1e1e"></div>
<div class="a" style="left:737px;top:756px;width:102.7px;height:17.7px;background:#e01208;border-bottom:1px solid rgba(0,0,0,.45)"></div>
<div class="t" style="left:738.46px;top:760px;font-size:12.5px;color:#fff;transform:scaleX(0.9837);">16</div>
<div class="t" style="left:827.91px;top:759px;font-size:13.3px;color:#fff;">C</div>
<div class="t" style="left:771.82px;top:790px;font-size:18.3px;color:#f0f0f0;transform:scaleX(0.8549);">RED</div>
<div class="a" style="left:842.5px;top:754.7px;width:105.6px;height:83.6px;border:1px solid #141414"></div>
<div class="a" style="left:844px;top:756px;width:102.7px;height:80.8px;background:#1e1e1e"></div>
<div class="a" style="left:844px;top:756px;width:102.7px;height:17.7px;background:#0040e0;border-bottom:1px solid rgba(0,0,0,.45)"></div>
<div class="t" style="left:845.46px;top:760px;font-size:12.5px;color:#fff;transform:scaleX(0.9900);">17</div>
<div class="t" style="left:934.91px;top:759px;font-size:13.3px;color:#fff;">C</div>
<div class="t" style="left:874.39px;top:790px;font-size:18.3px;color:#f0f0f0;transform:scaleX(0.8700);">BLUE</div>
<div class="a" style="left:949.5px;top:754.7px;width:105.6px;height:83.6px;border:1px solid #141414"></div>
<div class="a" style="left:951px;top:756px;width:102.7px;height:80.8px;background:#1e1e1e"></div>
<div class="a" style="left:951px;top:756px;width:102.7px;height:17.7px;background:#008c00;border-bottom:1px solid rgba(0,0,0,.45)"></div>
<div class="t" style="left:952.46px;top:760px;font-size:12.5px;color:#fff;transform:scaleX(0.9832);">18</div>
<div class="t" style="left:1041.91px;top:759px;font-size:13.3px;color:#fff;">C</div>
<div class="t" style="left:974.21px;top:790px;font-size:18.3px;color:#f0f0f0;transform:scaleX(0.8585);">GREEN</div>
<div class="a" style="left:1056.5px;top:754.7px;width:105.6px;height:83.6px;border:1px solid #141414"></div>
<div class="a" style="left:1058px;top:756px;width:102.7px;height:80.8px;background:#1e1e1e"></div>
<div class="a" style="left:1058px;top:756px;width:102.7px;height:17.7px;background:#e0c800;border-bottom:1px solid rgba(0,0,0,.45)"></div>
<div class="t" style="left:1059.46px;top:760px;font-size:12.5px;color:#111;transform:scaleX(0.9871);">19</div>
<div class="t" style="left:1148.91px;top:759px;font-size:13.3px;color:#111;">C</div>
<div class="t" style="left:1076.77px;top:790px;font-size:18.3px;color:#f0f0f0;transform:scaleX(0.8310);">YELLOW</div>
<div class="a" style="left:1163.5px;top:754.7px;width:105.6px;height:83.6px;border:1px solid #141414"></div>
<div class="a" style="left:1165px;top:756px;width:102.7px;height:80.8px;background:#1e1e1e"></div>
<div class="a" style="left:1165px;top:756px;width:102.7px;height:17.7px;background:#f8c8c8;border-bottom:1px solid rgba(0,0,0,.45)"></div>
<div class="t" style="left:1166.8px;top:760px;font-size:12.5px;color:#111;transform:scaleX(0.9541);">20</div>
<div class="t" style="left:1255.91px;top:759px;font-size:13.3px;color:#111;">C</div>
<div class="t" style="left:1172.22px;top:787px;font-size:15.7px;color:#f0f0f0;transform:scaleX(0.9176);">HALF MINUS</div>
<div class="t" style="left:1192.64px;top:807px;font-size:15.7px;color:#f0f0f0;transform:scaleX(0.8407);">GREEN</div>
<div class="a" style="left:200.5px;top:840.7px;width:105.6px;height:83.6px;border:1px solid #141414"></div>
<div class="a" style="left:202px;top:842px;width:102.7px;height:80.8px;background:#1e1e1e"></div>
<div class="a" style="left:202px;top:842px;width:102.7px;height:17.7px;background:#e4f2f4;border-bottom:1px solid rgba(0,0,0,.45)"></div>
<div class="t" style="left:203.79px;top:846px;font-size:12.5px;color:#111;transform:scaleX(0.9633);">21</div>
<div class="t" style="left:292.91px;top:845px;font-size:13.3px;color:#111;">C</div>
<div class="t" style="left:236.47px;top:876px;font-size:18.3px;color:#f0f0f0;transform:scaleX(0.8903);">CTB</div>
<div class="a" style="left:307.5px;top:840.7px;width:105.6px;height:83.6px;border:1px solid #141414"></div>
<div class="a" style="left:309px;top:842px;width:102.7px;height:80.8px;background:#1e1e1e"></div>
<div class="a" style="left:309px;top:842px;width:102.7px;height:17.7px;background:#dcdcf0;border-bottom:1px solid rgba(0,0,0,.45)"></div>
<div class="t" style="left:310.79px;top:846px;font-size:12.5px;color:#111;transform:scaleX(0.9647);">22</div>
<div class="t" style="left:399.91px;top:845px;font-size:13.3px;color:#111;">C</div>
<div class="t" style="left:330.43px;top:867px;font-size:18.3px;color:#f0f0f0;transform:scaleX(0.9004);">TIPTON</div>
<div class="t" style="left:339.1px;top:891px;font-size:18.3px;color:#f0f0f0;transform:scaleX(0.8678);">BLUE</div>
<div class="a" style="left:414.5px;top:840.7px;width:105.6px;height:83.6px;border:1px solid #141414"></div>
<div class="a" style="left:416px;top:842px;width:102.7px;height:80.8px;background:#1e1e1e"></div>
<div class="a" style="left:416px;top:842px;width:102.7px;height:17.7px;background:#f2f2f2;border-bottom:1px solid rgba(0,0,0,.45)"></div>
<div class="t" style="left:417.8px;top:846px;font-size:12.5px;color:#111;transform:scaleX(0.9587);">23</div>
<div class="t" style="left:506.91px;top:845px;font-size:13.3px;color:#111;">C</div>
<div class="t" style="left:443.61px;top:876px;font-size:18.3px;color:#f0f0f0;transform:scaleX(1.0231);">Open</div>
<div class="a" style="left:521.5px;top:840.7px;width:105.6px;height:83.6px;border:1px solid #141414"></div>
<div class="t" style="left:524.91px;top:846px;font-size:12.5px;color:#606060;transform:scaleX(0.9451);">24</div>
<div class="a" style="left:628.5px;top:840.7px;width:105.6px;height:83.6px;border:1px solid #141414"></div>
<div class="t" style="left:631.9px;top:846px;font-size:12.5px;color:#606060;transform:scaleX(0.9568);">25</div>
<div class="a" style="left:735.5px;top:840.7px;width:105.6px;height:83.6px;border:1px solid #141414"></div>
<div class="t" style="left:738.9px;top:846px;font-size:12.5px;color:#606060;transform:scaleX(0.9587);">26</div>
<div class="a" style="left:842.5px;top:840.7px;width:105.6px;height:83.6px;border:1px solid #141414"></div>
<div class="t" style="left:845.89px;top:846px;font-size:12.5px;color:#606060;transform:scaleX(0.9647);">27</div>
<div class="a" style="left:949.5px;top:840.7px;width:105.6px;height:83.6px;border:1px solid #141414"></div>
<div class="a" style="left:951px;top:842.8px;width:102.7px;height:80px;background:#646464"></div>
<div class="t" style="left:1045.92px;top:845px;font-size:11px;color:#9a9a9a;">-</div>
<div class="t" style="left:981.61px;top:876px;font-size:18.3px;color:#e4e4e4;transform:scaleX(0.9586);">Cl 28</div>
<div class="a" style="left:1056.5px;top:840.7px;width:105.6px;height:83.6px;border:1px solid #141414"></div>
<div class="t" style="left:1059.9px;top:846px;font-size:12.5px;color:#606060;transform:scaleX(0.9619);">29</div>
<div class="a" style="left:1163.5px;top:840.7px;width:105.6px;height:83.6px;border:1px solid #141414"></div>
<div class="t" style="left:1167.05px;top:846px;font-size:12.5px;color:#606060;transform:scaleX(0.9429);">30</div>
<div class="a" style="left:200.5px;top:926.7px;width:105.6px;height:83.6px;border:1px solid #141414"></div>
<div class="a" style="left:202px;top:928px;width:102.7px;height:80.8px;background:#1e1e1e"></div>
<div class="a" style="left:202px;top:928px;width:102.7px;height:17.7px;background:#f2f2f2;border-bottom:1px solid rgba(0,0,0,.45)"></div>
<div class="t" style="left:203.95px;top:932px;font-size:12.5px;color:#111;transform:scaleX(0.9518);">31</div>
<div class="t" style="left:292.91px;top:931px;font-size:13.3px;color:#111;">C</div>
<div class="t" style="left:207.93px;top:962px;font-size:18.3px;color:#f0f0f0;transform:scaleX(0.8777);">WHITE RGB</div>
<div class="a" style="left:307.5px;top:926.7px;width:105.6px;height:83.6px;border:1px solid #141414"></div>
<div class="a" style="left:309px;top:928px;width:102.7px;height:80.8px;background:#1e1e1e"></div>
<div class="a" style="left:309px;top:928px;width:102.7px;height:17.7px;background:#000;border-bottom:1px solid rgba(0,0,0,.45)"></div>
<div class="t" style="left:310.95px;top:932px;font-size:12.5px;color:#fff;transform:scaleX(0.9532);">32</div>
<div class="t" style="left:399.91px;top:931px;font-size:13.3px;color:#fff;">C</div>
<div class="t" style="left:313.98px;top:962px;font-size:18.3px;color:#f0f0f0;transform:scaleX(0.8770);">BLACK RGB</div>
<div class="a" style="left:414.5px;top:926.7px;width:105.6px;height:83.6px;border:1px solid #141414"></div>
<div class="t" style="left:418.05px;top:932px;font-size:12.5px;color:#606060;transform:scaleX(0.9473);">33</div>
<div class="a" style="left:521.5px;top:926.7px;width:105.6px;height:83.6px;border:1px solid #141414"></div>
<div class="t" style="left:525.06px;top:932px;font-size:12.5px;color:#606060;transform:scaleX(0.9340);">34</div>
<div class="a" style="left:628.5px;top:926.7px;width:105.6px;height:83.6px;border:1px solid #141414"></div>
<div class="t" style="left:632.05px;top:932px;font-size:12.5px;color:#606060;transform:scaleX(0.9455);">35</div>
<div class="a" style="left:735.5px;top:926.7px;width:105.6px;height:83.6px;border:1px solid #141414"></div>
<div class="t" style="left:739.05px;top:932px;font-size:12.5px;color:#606060;transform:scaleX(0.9473);">36</div>
<div class="a" style="left:842.5px;top:926.7px;width:105.6px;height:83.6px;border:1px solid #141414"></div>
<div class="t" style="left:846.05px;top:932px;font-size:12.5px;color:#606060;transform:scaleX(0.9532);">37</div>
<div class="a" style="left:949.5px;top:926.7px;width:105.6px;height:83.6px;border:1px solid #141414"></div>
<div class="t" style="left:953.05px;top:932px;font-size:12.5px;color:#606060;transform:scaleX(0.9469);">38</div>
<div class="a" style="left:1056.5px;top:926.7px;width:105.6px;height:83.6px;border:1px solid #141414"></div>
<div class="t" style="left:1060.05px;top:932px;font-size:12.5px;color:#606060;transform:scaleX(0.9505);">39</div>
<div class="a" style="left:1163.5px;top:926.7px;width:105.6px;height:83.6px;border:1px solid #141414"></div>
<div class="t" style="left:1167.23px;top:932px;font-size:12.5px;color:#606060;transform:scaleX(0.9293);">40</div>
<div class="a" style="left:200.5px;top:1012.7px;width:105.6px;height:83.6px;border:1px solid #141414"></div>
<div class="t" style="left:204.23px;top:1018px;font-size:12.5px;color:#606060;transform:scaleX(0.9380);">41</div>
<div class="a" style="left:307.5px;top:1012.7px;width:105.6px;height:83.6px;border:1px solid #141414"></div>
<div class="t" style="left:311.23px;top:1018px;font-size:12.5px;color:#606060;transform:scaleX(0.9393);">42</div>
<div class="a" style="left:414.5px;top:1012.7px;width:105.6px;height:83.6px;border:1px solid #141414"></div>
<div class="t" style="left:418.23px;top:1018px;font-size:12.5px;color:#606060;transform:scaleX(0.9336);">43</div>
<div class="a" style="left:521.5px;top:1012.7px;width:105.6px;height:83.6px;border:1px solid #141414"></div>
<div class="t" style="left:525.24px;top:1018px;font-size:12.5px;color:#606060;transform:scaleX(0.9207);">44</div>
<div class="a" style="left:628.5px;top:1012.7px;width:105.6px;height:83.6px;border:1px solid #141414"></div>
<div class="t" style="left:632.23px;top:1018px;font-size:12.5px;color:#606060;transform:scaleX(0.9319);">45</div>
<div class="a" style="left:735.5px;top:1012.7px;width:105.6px;height:83.6px;border:1px solid #141414"></div>
<div class="t" style="left:739.23px;top:1018px;font-size:12.5px;color:#606060;transform:scaleX(0.9336);">46</div>
<div class="a" style="left:842.5px;top:1012.7px;width:105.6px;height:83.6px;border:1px solid #141414"></div>
<div class="t" style="left:846.23px;top:1018px;font-size:12.5px;color:#606060;transform:scaleX(0.9393);">47</div>
<div class="a" style="left:949.5px;top:1012.7px;width:105.6px;height:83.6px;border:1px solid #141414"></div>
<div class="t" style="left:953.23px;top:1018px;font-size:12.5px;color:#606060;transform:scaleX(0.9332);">48</div>
<div class="a" style="left:1056.5px;top:1012.7px;width:105.6px;height:83.6px;border:1px solid #141414"></div>
<div class="t" style="left:1060.23px;top:1018px;font-size:12.5px;color:#606060;transform:scaleX(0.9367);">49</div>
<div class="a" style="left:1163.5px;top:1012.7px;width:105.6px;height:83.6px;border:1px solid #141414"></div>
<div class="t" style="left:1167.03px;top:1018px;font-size:12.5px;color:#606060;transform:scaleX(0.9446);">50</div>
<svg style="left:1297.2px;top:737.8px" width="44" height="210" fill="none" stroke-width="1.5"><path d="M2 1h40M2 22L22 3l20 19" stroke="#444"/><path d="M2 81.500L22 62.500l20 19" stroke="#444"/><circle cx="22" cy="102" r="4.600" stroke="#a09a9c"/><path d="M2 122l20 19 20-19" stroke="#a09a9c"/><path d="M2 181l20 19 20-19M2 201.500h40" stroke="#a09a9c"/></svg>
<svg style="left:1290px;top:1030px" width="60" height="50" fill="none" stroke="#a09a9c" stroke-width="1.500"><path d="M7.700 24.900Q29.400 -0.300 51 24.900Q29.400 50.100 7.700 24.900z"/><circle cx="29.400" cy="24.900" r="11.800"/><circle cx="29.400" cy="24.900" r="3.800" fill="#a09a9c" stroke="none"/></svg>
<div class="a" style="left:1370.2px;top:582px;width:5.5px;height:515px;background:#9a9798;border-radius:3px"></div>
<div class="a" style="left:1380px;top:577px;width:1px;height:598px;background:#333"></div>
<div class="a" style="left:200px;top:1101.5px;width:1177.5px;height:74px;background:#121212;border:1px solid #202020"></div>
<div class="a" style="left:526px;top:1103px;width:74.9px;height:72px;border-left:1px solid #262626;border-right:1px solid #262626;"></div>
<div class="a" style="left:540.3px;top:1115px;width:48.200px;height:47.800px;border:1.700px solid #b4acae;color:#b4acae;font-size:34px;line-height:45.500px;text-align:center">I</div>
<div class="a" style="left:600.9px;top:1103px;width:74.9px;height:72px;border-left:1px solid #262626;border-right:1px solid #262626;"></div>
<div class="a" style="left:615.2px;top:1115px;width:48.200px;height:47.800px;border:1.700px solid #c8102e;color:#c8102e;font-size:34px;line-height:45.500px;text-align:center">P</div>
<div class="a" style="left:675.8px;top:1103px;width:74.9px;height:72px;border-left:1px solid #262626;border-right:1px solid #262626;background:radial-gradient(ellipse 75% 55% at 50% 108%,#8a2320 0%,rgba(138,35,32,0) 100%),linear-gradient(#581312 0,#6a1716 50%,#741a18 100%);"></div>
<div class="a" style="left:690.1px;top:1115px;width:48.200px;height:47.800px;border:1.700px solid #f4f4f4;color:#f4f4f4;font-size:34px;line-height:45.500px;text-align:center">C</div>
<div class="a" style="left:750.7px;top:1103px;width:74.9px;height:72px;border-left:1px solid #262626;border-right:1px solid #262626;"></div>
<div class="a" style="left:765px;top:1115px;width:48.200px;height:47.800px;border:1.700px solid #0a9a5c;color:#0a9a5c;font-size:34px;line-height:45.500px;text-align:center">G</div>
<div class="a" style="left:825.6px;top:1103px;width:74.9px;height:72px;border-left:1px solid #262626;border-right:1px solid #262626;"></div>
<div class="a" style="left:839.9px;top:1115px;width:48.200px;height:47.800px;border:1.700px solid #c9a832;color:#c9a832;font-size:34px;line-height:45.500px;text-align:center">B</div>
<div class="a" style="left:900.5px;top:1103px;width:74.9px;height:72px;border-left:1px solid #262626;border-right:1px solid #262626;"></div>
<div class="a" style="left:914.8px;top:1115px;width:48.200px;height:47.800px;border:1.700px solid #3f88c5;color:#3f88c5;font-size:34px;line-height:45.500px;text-align:center">E</div>
<div class="a" style="left:975.4px;top:1103px;width:74.9px;height:72px;border-left:1px solid #262626;border-right:1px solid #262626;"></div>
<div class="a" style="left:989.7px;top:1115px;width:48.200px;height:47.800px;border:1.700px solid #a80cc0;color:#a80cc0;font-size:34px;line-height:45.500px;text-align:center">F</div>
<div class="a" style="left:1383px;top:577px;width:604px;height:114px;background:#141414"></div>
<div class="a" style="left:1804px;top:578px;width:183px;height:113px;background:linear-gradient(#1c1c1c,#222)"></div>
<div class="a" style="left:1388px;top:582px;width:89px;height:107.5px;background:#1c1c1c"></div>
<div class="a" style="left:1478px;top:582px;width:117px;height:36.3px;background:radial-gradient(ellipse 60% 70% at 50% 118%,#84211f 0%,rgba(132,33,31,0) 100%),radial-gradient(ellipse 110% 130% at 50% 45%,rgba(0,0,0,0) 55%,rgba(0,0,0,.2) 100%),linear-gradient(#7a1c1b 0,#6a1716 45%,#681716 100%)"></div>
<div class="a" style="left:1478px;top:619.5px;width:117px;height:34.7px;background:radial-gradient(ellipse 60% 70% at 50% 118%,#84211f 0%,rgba(132,33,31,0) 100%),radial-gradient(ellipse 110% 130% at 50% 45%,rgba(0,0,0,0) 55%,rgba(0,0,0,.2) 100%),linear-gradient(#7a1c1b 0,#6a1716 45%,#681716 100%)"></div>
<div class="a" style="left:1478px;top:655.5px;width:117px;height:34.5px;background:radial-gradient(ellipse 60% 70% at 50% 118%,#84211f 0%,rgba(132,33,31,0) 100%),radial-gradient(ellipse 110% 130% at 50% 45%,rgba(0,0,0,0) 55%,rgba(0,0,0,.2) 100%),linear-gradient(#7a1c1b 0,#6a1716 45%,#681716 100%)"></div>
<div class="a" style="left:1597px;top:582px;width:105px;height:36.3px;background:#383838"></div>
<div class="a" style="left:1597px;top:619.5px;width:105px;height:34.7px;background:#383838"></div>
<div class="a" style="left:1597px;top:655.5px;width:105px;height:34.5px;background:#383838"></div>
<div class="a" style="left:1703.3px;top:582px;width:100px;height:72.2px;background:#1c1c1c"></div>
<div class="a" style="left:1703.3px;top:655.5px;width:100px;height:34.5px;background:#1c1c1c"></div>
<div class="t" style="left:1399.5px;top:629px;font-size:15.7px;color:#eee;transform:scaleX(0.9437);">OPTIONS</div>
<div class="t" style="left:1488.96px;top:594px;font-size:15.7px;color:#f0f0f0;transform:scaleX(0.9595);">Follow Values</div>
<div class="t" style="left:1494.54px;top:630px;font-size:15.7px;color:#f0f0f0;transform:scaleX(0.9789);">Follow &nbsp;Cue</div>
<div class="t" style="left:1496.12px;top:666px;font-size:15.7px;color:#f0f0f0;transform:scaleX(0.9937);">Follow Grid</div>
<div class="t" style="left:1603.37px;top:594px;font-size:15.7px;color:#6a6a6a;transform:scaleX(0.9699);">ADD MACRO</div>
<div class="t" style="left:1604.68px;top:630px;font-size:15.7px;color:#6a6a6a;transform:scaleX(0.9138);">INSERT LINK</div>
<div class="t" style="left:1603.12px;top:666px;font-size:15.7px;color:#6a6a6a;">MARK toggle</div>
<div class="t" style="left:1712.08px;top:612px;font-size:15.7px;color:#eee;transform:scaleX(0.9488);">EDIT MODE</div>
<div class="t" style="left:1711.51px;top:666px;font-size:15.7px;color:#eee;transform:scaleX(0.9211);">RENUMBER</div>
<div class="t" style="left:1806.91px;top:597px;font-size:22.3px;color:#eee;transform:scaleX(0.9646);">Cuelist</div>
<div class="t" style="left:1962.24px;top:597px;font-size:22.3px;color:#eee;">1</div>
<div class="a" style="left:1805.5px;top:619.5px;width:181.5px;height:42.5px;border:1.500px solid #e4e4e4;border-right:0;background:#1c1c1c"></div>
<div class="t" style="left:1812.58px;top:632px;font-size:29px;color:#f0f0f0;transform:scaleX(0.9271);">Sample Cues</div>
<div class="a" style="left:1383px;top:691px;width:604px;height:484px;background:#3c3c3c;border:1px solid #9a9a9a"></div>
<div class="a" style="left:1384px;top:692px;width:602px;height:35px;background:linear-gradient(#222 0,#262626 78%,#2e2e2e 82%,#323232 100%)"></div>
<div class="t" style="left:1383.28px;top:696px;font-size:18.6px;color:#f0f0f0;transform:scaleX(1.0620);">No</div>
<div class="t" style="left:1478.99px;top:696px;font-size:18.6px;color:#f0f0f0;transform:scaleX(0.9923);">Name</div>
<div class="t" style="left:1718.79px;top:696px;font-size:18.6px;color:#f0f0f0;transform:scaleX(0.9813);">Trigger</div>
<div class="t" style="left:1852.44px;top:696px;font-size:18.6px;color:#f0f0f0;transform:scaleX(0.9589);">Delay</div>
<div class="a" style="left:1976px;top:692px;width:10px;height:34px;overflow:hidden"><div class="t" style="left:0.500px;top:3px;font-size:18.600px;color:#f0f0f0">C</div></div>
<div class="t" style="left:1385.07px;top:732px;font-size:18.6px;color:#b4b4b4;">1</div>
<div class="t" style="left:1479.62px;top:732px;font-size:18.6px;color:#b4b4b4;transform:scaleX(0.9334);">Cue 1</div>
<div class="t" style="left:1719.03px;top:732px;font-size:18.6px;color:#b4b4b4;transform:scaleX(0.9309);">Go</div>
<div class="t" style="left:1852.94px;top:732px;font-size:18.6px;color:#b4b4b4;transform:scaleX(0.9098);">0s</div>
<div class="t" style="left:1385.33px;top:768px;font-size:18.6px;color:#b4b4b4;">2</div>
<div class="t" style="left:1479.62px;top:768px;font-size:18.6px;color:#b4b4b4;transform:scaleX(0.9340);">Cue 2</div>
<div class="t" style="left:1719.03px;top:768px;font-size:18.6px;color:#b4b4b4;transform:scaleX(0.9309);">Go</div>
<div class="t" style="left:1852.94px;top:768px;font-size:18.6px;color:#b4b4b4;transform:scaleX(0.9098);">0s</div>
<div class="t" style="left:1975.78px;top:768px;font-size:18.6px;color:#b4b4b4;">0</div>
<div class="t" style="left:1385.38px;top:804px;font-size:18.6px;color:#b4b4b4;">3</div>
<div class="t" style="left:1479.62px;top:804px;font-size:18.6px;color:#b4b4b4;transform:scaleX(0.9317);">Cue 3</div>
<div class="t" style="left:1719.03px;top:804px;font-size:18.6px;color:#b4b4b4;transform:scaleX(0.9309);">Go</div>
<div class="t" style="left:1852.94px;top:804px;font-size:18.6px;color:#b4b4b4;transform:scaleX(0.9098);">0s</div>
<div class="t" style="left:1975.78px;top:804px;font-size:18.6px;color:#b4b4b4;">0</div>
<div class="t" style="left:1385.39px;top:840px;font-size:18.6px;color:#b4b4b4;">4</div>
<div class="t" style="left:1479.62px;top:840px;font-size:18.6px;color:#b4b4b4;transform:scaleX(0.9264);">Cue 4</div>
<div class="t" style="left:1719.03px;top:840px;font-size:18.6px;color:#b4b4b4;transform:scaleX(0.9309);">Go</div>
<div class="t" style="left:1852.94px;top:840px;font-size:18.6px;color:#b4b4b4;transform:scaleX(0.9098);">0s</div>
<div class="a" style="left:1384px;top:871.3px;width:602px;height:36px;background:#2e4656"></div>
<div class="t" style="left:1385.35px;top:876px;font-size:18.6px;color:#e2e2e2;">5</div>
<div class="t" style="left:1479.62px;top:876px;font-size:18.6px;color:#e2e2e2;transform:scaleX(0.9310);">Cue 5</div>
<div class="t" style="left:1719.03px;top:876px;font-size:18.6px;color:#e2e2e2;transform:scaleX(0.9309);">Go</div>
<div class="t" style="left:1852.94px;top:876px;font-size:18.6px;color:#e2e2e2;transform:scaleX(0.9098);">0s</div>
<div class="t" style="left:1975.78px;top:876px;font-size:18.6px;color:#e2e2e2;">0</div>
<div class="t" style="left:1385.26px;top:912px;font-size:18.6px;color:#b4b4b4;">6</div>
<div class="t" style="left:1479.62px;top:912px;font-size:18.6px;color:#b4b4b4;transform:scaleX(0.9317);">Cue 6</div>
<div class="t" style="left:1719.03px;top:912px;font-size:18.6px;color:#b4b4b4;transform:scaleX(0.9309);">Go</div>
<div class="t" style="left:1852.94px;top:912px;font-size:18.6px;color:#b4b4b4;transform:scaleX(0.9098);">0s</div>
<div class="t" style="left:1385.32px;top:948px;font-size:18.6px;color:#b4b4b4;">7</div>
<div class="t" style="left:1479.62px;top:948px;font-size:18.6px;color:#b4b4b4;transform:scaleX(0.9340);">Cue 7</div>
<div class="t" style="left:1719.03px;top:948px;font-size:18.6px;color:#b4b4b4;transform:scaleX(0.9309);">Go</div>
<div class="t" style="left:1852.94px;top:948px;font-size:18.6px;color:#b4b4b4;transform:scaleX(0.9098);">0s</div>
<div class="t" style="left:1385.33px;top:984px;font-size:18.6px;color:#b4b4b4;">8</div>
<div class="t" style="left:1479.62px;top:984px;font-size:18.6px;color:#b4b4b4;transform:scaleX(0.9315);">Cue 8</div>
<div class="t" style="left:1719.03px;top:984px;font-size:18.6px;color:#b4b4b4;transform:scaleX(0.9309);">Go</div>
<div class="t" style="left:1852.94px;top:984px;font-size:18.6px;color:#b4b4b4;transform:scaleX(0.9098);">0s</div>
<div class="a" style="left:1384px;top:1149px;width:602px;height:25.5px;background:#f0f0f0"></div>
<div class="a" style="left:1409.5px;top:1155px;width:25.5px;height:13.5px;background:#a8a8a8"></div>
<div class="a" style="left:0px;top:1176px;width:1989px;height:1px;background:#4a4a4a"></div>
<div class="a" style="left:1989px;top:1176px;width:59px;height:1px;background:#2c2c2c"></div>
<div class="a" style="left:0px;top:1196.5px;width:105px;height:35px;background:linear-gradient(#7a1c1b,#6e1918);border:1px solid #5a5a5a"></div>
<div class="t" style="left:32.94px;top:1206px;font-size:18px;color:#f4f4f4;transform:scaleX(0.7868);">FREE</div>
<div class="a" style="left:112px;top:1196.2px;width:1143px;height:35.5px;border:1.200px solid #505050"></div>
<div class="t" style="left:119.93px;top:1203px;font-size:24.4px;color:#525252;transform:scaleX(0.8322);">DESELECT GROUP User 3</div>
<svg style="left:1274px;top:1199px" width="110" height="30" fill="none" stroke="#d4d4d4" stroke-width="1"><rect x="1.27" y="1.57" width="52.30" height="24.07"/><path d="M1.27 7.38H53.57M1.27 13.52H53.57M1.27 19.33H53.57M16.21 1.57V19.33M23.85 1.57V19.33M31.65 1.57V19.33M39.13 1.57V19.33M8.41 1.57V25.64M46.60 1.57V25.64"/><rect x="78.64" y="1.57" width="23.08" height="24.07"/><path d="M78.64 7.38H101.71M78.64 13.52H101.71M78.64 19.33H101.71M86.44 1.57V25.64M94.24 1.57V25.64"/></svg>
<div class="a" style="left:1404px;top:1190.7px;width:46px;height:45.5px;border:1px solid #d8d8d8"></div>
<div class="t" style="left:1419.48px;top:1204px;font-size:20.9px;color:#f4f4f4;font-weight:bold;">B</div>
<div class="a" style="left:1460px;top:1179px;width:124px;height:64.7px;border:1px solid #bdbdbd;background:#1a1a1a"></div>
<div class="a" style="left:1461px;top:1180.5px;width:22.5px;height:62px;background:#2c2c2c"></div>
<div class="t" style="left:1463px;top:1229.01px;font-size:17px;color:#eee;transform:rotate(-90deg) scaleX(0.7937);transform-origin:0 0">FADE</div>
<div class="a" style="left:1484.5px;top:1181px;width:98.2px;height:30.5px;background:#1f3f75"></div>
<div class="t" style="left:1508.91px;top:1188px;font-size:18px;color:#f0f0f0;transform:scaleX(1.0395);">Zoom</div>
<div class="t" style="left:1502.86px;top:1219px;font-size:18px;color:#f0f0f0;transform:scaleX(1.0322);font-weight:bold;">[ 50% ]</div>
<div class="a" style="left:1588px;top:1179.5px;width:124.5px;height:64px;border:1px solid #303030"></div>
<div class="a" style="left:1717px;top:1179.5px;width:124.5px;height:64px;border:1px solid #303030"></div>
<div class="a" style="left:1845.5px;top:1179.5px;width:124.5px;height:64px;border:1px solid #303030"></div>
<svg style="left:1968px;top:1180px" width="80" height="185" fill="none" stroke="#e8e8e8" stroke-width="1.9"><path d="M41.76 48.81V17.90M30.64 29.02L41.76 17.90L52.88 29.02"/><path d="M26.44 82.98V106.92a7.66 7.66 0 0 0 15.32 0V93.08a7.66 7.66 0 0 1 15.32 0V116.07M20.07 89.36L26.44 82.98L32.81 89.36M50.71 109.83L57.08 116.20L63.46 109.83"/><rect x="21.69" y="138.31" width="40.68" height="36.88" rx="1.5"/><path d="M21.69 145.36H62.37M29.15 151.19V168.81M41.76 151.19V168.81M54.24 151.19V168.81"/><rect x="25.90" y="156.20" width="6.51" height="5.15" fill="#000"/><rect x="38.51" y="160.81" width="6.51" height="5.15" fill="#000"/><rect x="50.98" y="156.20" width="6.51" height="5.15" fill="#000"/></svg>
<div class="a" style="left:0px;top:1249px;width:58.5px;height:116px;border:1px solid #6a6a6a;border-bottom:0"></div>
<div class="t" style="left:3.6px;top:1253px;font-size:14px;color:#eee;transform:scaleX(0.9150);">0 : 1</div>
<div class="t" style="left:20px;top:1332.92px;font-size:21px;color:#f0f0f0;transform:rotate(-90deg) scaleX(0.8838);transform-origin:0 0">Main</div>
<div class="pb" style="left:61px"></div>
<div class="t" style="left:109.68px;top:1250px;font-size:15.3px;color:#f2f2f2;transform:scaleX(1.0460);font-weight:bold;">DaVinci</div>
<div class="a" style="left:61px;top:1270px;width:156px;height:16.500px;overflow:hidden">
<div class="t" style="left:44.99px;top:2px;font-size:15.3px;transform:scaleX(1.0339);color:#f2f2f2;font-weight:bold">Intensity</div></div>
<div class="t" style="left:63.63px;top:1254px;font-size:18px;color:#f2f2f2;font-weight:bold;">1</div>
<div class="t" style="left:64.73px;top:1345px;font-size:15.2px;color:#eee;transform:scaleX(0.9856);">#15</div>
<div class="t" style="left:129.08px;top:1345px;font-size:15.2px;color:#eee;transform:scaleX(1.2138);">-/6</div>
<div class="t" style="left:178.59px;top:1345px;font-size:15.2px;color:#ffa200;transform:scaleX(0.9603);">100%</div>
<div class="pb" style="left:220px"></div>
<div class="t" style="left:258.85px;top:1250px;font-size:15.3px;color:#f2f2f2;transform:scaleX(0.9790);font-weight:bold;">Fuze Wash</div>
<div class="a" style="left:220px;top:1270px;width:156px;height:16.500px;overflow:hidden">
<div class="t" style="left:44.99px;top:2px;font-size:15.3px;transform:scaleX(1.0339);color:#f2f2f2;font-weight:bold">Intensity</div></div>
<div class="t" style="left:222.99px;top:1254px;font-size:18px;color:#f2f2f2;font-weight:bold;">2</div>
<div class="t" style="left:223.73px;top:1345px;font-size:15.2px;color:#eee;transform:scaleX(0.9868);">#16</div>
<div class="t" style="left:288.08px;top:1345px;font-size:15.2px;color:#eee;transform:scaleX(1.2138);">-/6</div>
<div class="t" style="left:337.59px;top:1345px;font-size:15.2px;color:#ffa200;transform:scaleX(0.9603);">100%</div>
<div class="pb" style="left:379px"></div>
<div class="t" style="left:435.88px;top:1250px;font-size:15.3px;color:#f2f2f2;transform:scaleX(1.0905);font-weight:bold;">Dartz</div>
<div class="a" style="left:379px;top:1270px;width:156px;height:16.500px;overflow:hidden">
<div class="t" style="left:44.99px;top:2px;font-size:15.3px;transform:scaleX(1.0339);color:#f2f2f2;font-weight:bold">Intensity</div></div>
<div class="t" style="left:382.06px;top:1254px;font-size:18px;color:#f2f2f2;font-weight:bold;">3</div>
<div class="t" style="left:382.73px;top:1345px;font-size:15.2px;color:#eee;transform:scaleX(0.9907);">#17</div>
<div class="t" style="left:447.08px;top:1345px;font-size:15.2px;color:#eee;transform:scaleX(1.2138);">-/6</div>
<div class="t" style="left:496.59px;top:1345px;font-size:15.2px;color:#ffa200;transform:scaleX(0.9603);">100%</div>
<div class="pb" style="left:537px"></div>
<div class="t" style="left:584.41px;top:1262px;font-size:15.3px;color:#f2f2f2;transform:scaleX(1.0124);font-weight:bold;">Position</div>
<div class="t" style="left:539.86px;top:1254px;font-size:18px;color:#f2f2f2;font-weight:bold;">4</div>
<div class="t" style="left:540.73px;top:1345px;font-size:15.2px;color:#eee;transform:scaleX(0.9865);">#18</div>
<div class="t" style="left:605.09px;top:1345px;font-size:15.2px;color:#eee;transform:scaleX(1.1975);">-/4</div>
<div class="t" style="left:654.59px;top:1345px;font-size:15.2px;color:#ffa200;transform:scaleX(0.9603);">100%</div>
<div class="pb" style="left:696px"></div>
<div class="t" style="left:750.13px;top:1262px;font-size:15.3px;color:#f2f2f2;transform:scaleX(0.9852);font-weight:bold;">Colors</div>
<div class="t" style="left:698.92px;top:1254px;font-size:18px;color:#f2f2f2;font-weight:bold;">5</div>
<div class="t" style="left:699.73px;top:1345px;font-size:15.2px;color:#eee;transform:scaleX(0.9838);">#20</div>
<div class="t" style="left:764.08px;top:1345px;font-size:15.2px;color:#eee;transform:scaleX(1.2210);">-/7</div>
<div class="t" style="left:813.59px;top:1345px;font-size:15.2px;color:#ffa200;transform:scaleX(0.9603);">100%</div>
<div class="pb pbp" style="left:855px"></div>
<div class="t" style="left:913.19px;top:1250px;font-size:15.3px;color:#f2f2f2;transform:scaleX(1.0354);font-weight:bold;">Band</div>
<div class="a" style="left:855px;top:1270px;width:156px;height:16.500px;overflow:hidden">
<div class="t" style="left:47.41px;top:2px;font-size:15.3px;transform:scaleX(1.0124);color:#f2f2f2;font-weight:bold">Position</div></div>
<div class="t" style="left:857.94px;top:1254px;font-size:18px;color:#f2f2f2;font-weight:bold;">6</div>
<div class="t" style="left:858.73px;top:1345px;font-size:15.2px;color:#eee;transform:scaleX(0.9889);">#19</div>
<div class="t" style="left:923.08px;top:1345px;font-size:15.2px;color:#eee;transform:scaleX(1.2138);">-/3</div>
<div class="t" style="left:989.34px;top:1345px;font-size:15.2px;color:#ffa200;transform:scaleX(0.9360);">0%</div>
<div class="pb" style="left:1013px"></div>
<div class="t" style="left:1043.5px;top:1250px;font-size:15.3px;color:#f2f2f2;transform:scaleX(0.9751);font-weight:bold;">DyLOS Stage</div>
<div class="a" style="left:1013px;top:1270px;width:156px;height:16.500px;overflow:hidden">
<div class="t" style="left:57.36px;top:2px;font-size:15.3px;transform:scaleX(1.0234);color:#f2f2f2;font-weight:bold">Color</div></div>
<div class="t" style="left:1015.95px;top:1254px;font-size:18px;color:#f2f2f2;font-weight:bold;">7</div>
<div class="t" style="left:1016.73px;top:1345px;font-size:15.2px;color:#eee;transform:scaleX(0.9898);">#21</div>
<div class="t" style="left:1080.17px;top:1345px;font-size:15.2px;color:#eee;transform:scaleX(1.1576);">-/25</div>
<div class="t" style="left:1130.59px;top:1345px;font-size:15.2px;color:#ffa200;transform:scaleX(0.9603);">100%</div>
<div class="pb" style="left:1172px"></div>
<div class="t" style="left:1225.01px;top:1250px;font-size:15.3px;color:#f2f2f2;transform:scaleX(0.9719);font-weight:bold;">DyLOS</div>
<div class="a" style="left:1172px;top:1270px;width:156px;height:16.500px;overflow:hidden">
<div class="t" style="left:32.73px;top:2px;font-size:15.3px;transform:scaleX(1.0001);color:#f2f2f2;font-weight:bold">Preset Maps</div></div>
<div class="t" style="left:1174.94px;top:1254px;font-size:18px;color:#f2f2f2;font-weight:bold;">8</div>
<div class="t" style="left:1175.73px;top:1345px;font-size:15.2px;color:#eee;transform:scaleX(0.9907);">#22</div>
<div class="t" style="left:1239.17px;top:1345px;font-size:15.2px;color:#eee;transform:scaleX(1.1556);">-/10</div>
<div class="t" style="left:1289.59px;top:1345px;font-size:15.2px;color:#ffa200;transform:scaleX(0.9603);">100%</div>
<div class="pb" style="left:1331px"></div>
<div class="t" style="left:1384.01px;top:1250px;font-size:15.3px;color:#f2f2f2;transform:scaleX(0.9719);font-weight:bold;">DyLOS</div>
<div class="a" style="left:1331px;top:1270px;width:156px;height:16.500px;overflow:hidden">
<div class="t" style="left:30.36px;top:2px;font-size:15.3px;transform:scaleX(1.0141);color:#f2f2f2;font-weight:bold">ColourChoru</div></div>
<div class="t" style="left:1333.97px;top:1254px;font-size:18px;color:#f2f2f2;font-weight:bold;">9</div>
<div class="t" style="left:1334.73px;top:1345px;font-size:15.2px;color:#eee;transform:scaleX(1.0697);">#3</div>
<div class="t" style="left:1398.16px;top:1345px;font-size:15.2px;color:#eee;transform:scaleX(1.1625);">-/11</div>
<div class="t" style="left:1448.59px;top:1345px;font-size:15.2px;color:#ffa200;transform:scaleX(0.9603);">100%</div>
<div class="pb" style="left:1490px"></div>
<div class="t" style="left:1521.42px;top:1262px;font-size:15.3px;color:#f2f2f2;transform:scaleX(0.9714);font-weight:bold;">Sample Cues</div>
<div class="t" style="left:1492.79px;top:1254px;font-size:18px;color:#f2f2f2;transform:scaleX(1.0689);font-weight:bold;">10</div>
<div class="t" style="left:1493.73px;top:1345px;font-size:15.2px;color:#eee;transform:scaleX(1.0747);">#1</div>
<div class="t" style="left:1558.08px;top:1345px;font-size:15.2px;color:#eee;transform:scaleX(1.2132);">-/8</div>
<div class="t" style="left:1607.59px;top:1345px;font-size:15.2px;color:#ffa200;transform:scaleX(0.9603);">100%</div>
<div class="a" style="left:1489.5px;top:1248.8px;width:157.8px;height:117px;border:1.200px solid #bcaaaa;border-bottom:0"></div>
<div class="lst" style="left:1648px;top:1249px;width:157px"></div>
<div class="t" style="left:1650.86px;top:1253px;font-size:16.2px;color:#eee;transform:scaleX(0.8440);">11</div>
<div class="lst" style="left:1807px;top:1249px;width:158.2px;background:linear-gradient(#25477e,#1a3868 60%,#142c54);border-color:#1c3a6a"></div>
<div class="t" style="left:1809.86px;top:1253px;font-size:16.2px;color:#f0f0f0;transform:scaleX(0.9238);">12 CH25</div>
<div class="t" style="left:1924.47px;top:1253px;font-size:16.2px;color:#ffa200;transform:scaleX(0.9187);">100%</div>
<div class="lst" style="left:1648px;top:1272.3px;width:157px"></div>
<div class="t" style="left:1650.79px;top:1276px;font-size:16.2px;color:#eee;transform:scaleX(0.9021);">13</div>
<div class="lst" style="left:1807px;top:1272.3px;width:158.2px"></div>
<div class="t" style="left:1809.8px;top:1276px;font-size:16.2px;color:#eee;transform:scaleX(0.8890);">14</div>
<div class="lst" style="left:1648px;top:1295.6px;width:157px"></div>
<div class="t" style="left:1650.79px;top:1299px;font-size:16.2px;color:#eee;transform:scaleX(0.9003);">15</div>
<div class="lst" style="left:1807px;top:1295.6px;width:158.2px"></div>
<div class="t" style="left:1809.79px;top:1299px;font-size:16.2px;color:#eee;transform:scaleX(0.9021);">16</div>
<div class="lst" style="left:1648px;top:1318.9px;width:157px"></div>
<div class="t" style="left:1650.78px;top:1323px;font-size:16.2px;color:#eee;transform:scaleX(0.9079);">17</div>
<div class="lst" style="left:1807px;top:1318.9px;width:158.2px"></div>
<div class="t" style="left:1809.79px;top:1323px;font-size:16.2px;color:#eee;transform:scaleX(0.9017);">18</div>
<div class="lst" style="left:1648px;top:1342.2px;width:157px"></div>
<div class="t" style="left:1650.78px;top:1346px;font-size:16.2px;color:#eee;transform:scaleX(0.9052);">19</div>
<div class="lst" style="left:1807px;top:1342.2px;width:158.2px"></div>
<div class="t" style="left:1810.19px;top:1346px;font-size:16.2px;color:#eee;transform:scaleX(0.8750);">20</div>
</body></html>
